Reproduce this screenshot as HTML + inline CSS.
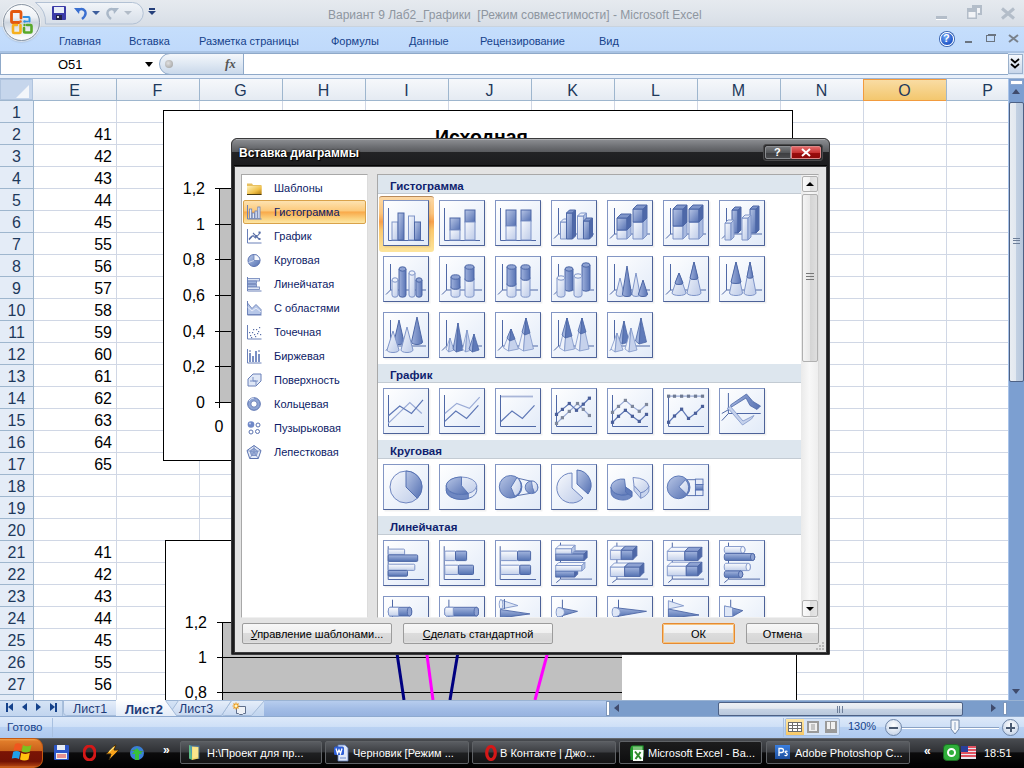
<!DOCTYPE html><html><head><meta charset="utf-8"><style>
*{margin:0;padding:0;box-sizing:border-box}
html,body{width:1024px;height:768px;overflow:hidden;background:#fff;font-family:"Liberation Sans",sans-serif}
.a{position:absolute}
.t{position:absolute;white-space:nowrap;line-height:1}
</style></head><body>
<div class="a" style="left:0;top:0;width:1024px;height:27px;background:linear-gradient(#e6eaef,#dde3ea 60%,#d7dde5)"></div>
<div class="a" style="left:0;top:26px;width:1024px;height:1px;background:#c9d3de"></div>
<svg class="a" style="left:0;top:0" width="150" height="27" viewBox="0 0 150 27"><defs><linearGradient id="qg" x1="0" y1="0" x2="0" y2="1"><stop offset="0" stop-color="#f2f5f9"/><stop offset="1" stop-color="#d6dee8"/></linearGradient></defs><path d="M35.5 2.5H132.5A10.75 10.75 0 0 1 132.5 24H45.5A24.5 24.5 0 0 0 35.5 2.5z" fill="url(#qg)" stroke="#b2c1d4"/></svg>
<svg class="a" style="left:52px;top:6px" width="14" height="14" viewBox="0 0 14 14">
<rect x="0" y="0" width="14" height="14" rx="1" fill="#3b3ba8"/><rect x="2" y="1" width="10" height="6" fill="#e8eef8"/><rect x="4" y="9" width="6" height="5" fill="#20204a"/><rect x="5" y="10" width="2" height="2" fill="#ddd"/></svg>
<svg class="a" style="left:74px;top:6px" width="14" height="14" viewBox="0 0 14 14">
<path d="M3 5 Q8 1 11 5 Q13 9 8 13" fill="none" stroke="#3a6fd0" stroke-width="2.4"/><path d="M0 2 L5 8 L6 2z" fill="#3a6fd0"/></svg>
<div class="a" style="left:92px;top:11px;width:0;height:0;border-left:4px solid transparent;border-right:4px solid transparent;border-top:4px solid #3d5e9c"></div>
<svg class="a" style="left:106px;top:6px" width="13" height="14" viewBox="0 0 13 14">
<path d="M10 5 Q5 1 2 5 Q0 9 5 13" fill="none" stroke="#aab8c8" stroke-width="2.4"/><path d="M13 2 L8 8 L7 2z" fill="#aab8c8"/></svg>
<div class="a" style="left:124px;top:11px;width:0;height:0;border-left:4px solid transparent;border-right:4px solid transparent;border-top:4px solid #b2bcc8"></div>
<div class="a" style="left:149px;top:8px;width:6px;height:2px;background:#243f7a"></div>
<div class="a" style="left:148px;top:11px;width:0;height:0;border-left:4px solid transparent;border-right:4px solid transparent;border-top:4px solid #243f7a"></div>
<div class="t" id="title" style="left:328px;top:9px;font-size:12px;color:#8e96a0">Вариант 9 Лаб2_Графики&nbsp; [Режим совместимости] - Microsoft Excel</div>
<div class="a" style="left:936px;top:16px;width:11px;height:3px;background:#b3bdc9;box-shadow:0 1px 0 #fff"></div>
<svg class="a" style="left:966px;top:4px" width="18" height="16" viewBox="0 0 18 16"><path d="M6 1h10v10h-4v-3h-6z" fill="#b3bdc9"/><rect x="8" y="4" width="6" height="5" fill="#f2f4f7"/><rect x="1" y="4" width="10" height="11" fill="#b3bdc9"/><rect x="2.5" y="8" width="7" height="5.5" fill="#f2f4f7"/></svg>
<svg class="a" style="left:1000px;top:7px" width="16" height="13" viewBox="0 0 16 13"><path d="M2 1.5 L14 11.5 M14 1.5 L2 11.5" stroke="#b3bdc9" stroke-width="3"/></svg>
<div class="a" style="left:0;top:27px;width:1024px;height:26px;background:linear-gradient(#c5defc,#bfd9fb)"></div>
<div class="a" style="left:0;top:51px;width:1024px;height:2px;background:#a9c3e3"></div>
<div class="t" style="left:59px;top:36px;font-size:11px;color:#15428b">Главная</div>
<div class="t" style="left:129px;top:36px;font-size:11px;color:#15428b">Вставка</div>
<div class="t" style="left:199px;top:36px;font-size:11px;color:#15428b">Разметка страницы</div>
<div class="t" style="left:331px;top:36px;font-size:11px;color:#15428b">Формулы</div>
<div class="t" style="left:409px;top:36px;font-size:11px;color:#15428b">Данные</div>
<div class="t" style="left:480px;top:36px;font-size:11px;color:#15428b">Рецензирование</div>
<div class="t" style="left:599px;top:36px;font-size:11px;color:#15428b">Вид</div>
<div class="a" style="left:940px;top:32px;width:14px;height:14px;border-radius:50%;background:radial-gradient(circle at 40% 35%,#6fa4f4,#1f55c7 70%);border:1px solid #fff;box-shadow:0 0 0 1px #3a64b0"></div>
<div class="t" style="left:943px;top:33px;font-size:11px;font-weight:bold;color:#fff">?</div>
<div class="a" style="left:965px;top:41px;width:7px;height:2px;background:#6b7480"></div>
<svg class="a" style="left:986px;top:34px" width="10" height="8" viewBox="0 0 10 8"><rect x="0.5" y="1.5" width="8" height="6" fill="none" stroke="#6b7480"/><rect x="2" y="0" width="8" height="2" fill="#6b7480"/></svg>
<svg class="a" style="left:1008px;top:34px" width="11" height="9" viewBox="0 0 11 9"><path d="M1 1 L10 8 M10 1 L1 8" stroke="#7a828c" stroke-width="2"/></svg>
<div class="a" style="left:3px;top:4px;width:37px;height:37px;border-radius:50%;background:linear-gradient(#fbfcfd,#eef1f5 35%,#cdd5df 50%,#e3e8ee 70%,#ffffff);border:1px solid #8a96a4;box-shadow:0 0 0 1px rgba(255,255,255,.6),0 1px 2px rgba(0,0,0,.25)"></div>
<svg class="a" style="left:0;top:0" width="44" height="44" viewBox="0 0 44 44">
<path d="M19 22.5H13Q11.5 22.5 11.5 21V13Q11.5 11.5 13 11.5H19.5Q21 11.5 21 13V18" fill="none" stroke="#e3580f" stroke-width="2.8" stroke-linecap="round"/>
<path d="M23.5 17H28.5Q29.5 17 29.5 18V21.5" fill="none" stroke="#2f8fe0" stroke-width="2" stroke-linecap="round"/>
<path d="M28 21.5H25" fill="none" stroke="#2f8fe0" stroke-width="1.6" stroke-linecap="round"/>
<path d="M20.5 26V32Q20.5 33 19.5 33H14Q13 33 13 32V26Q13 25 14 25H17" fill="none" stroke="#f6b01e" stroke-width="2.6" stroke-linecap="round"/>
<path d="M27 25H30.5Q31.5 25 31.5 26V31.5Q31.5 32.5 30.5 32.5H25Q24 32.5 24 31.5V28" fill="none" stroke="#58a829" stroke-width="2.6" stroke-linecap="round"/>
<circle cx="20.5" cy="21.5" r="1.3" fill="#ec6a1a"/><circle cx="24.5" cy="21.5" r="1.2" fill="#2f8fe0"/><circle cx="20.5" cy="25" r="1.2" fill="#f6b01e"/><circle cx="24.5" cy="25" r="1.2" fill="#58a829"/>
</svg>
<div class="a" style="left:0;top:53px;width:1024px;height:26px;background:#d8e6f7"></div>
<div class="a" style="left:0;top:53px;width:1008px;height:22px;background:#fff;border-top:1px solid #8fa9c9;border-bottom:1px solid #8fa9c9"></div>
<div class="a" style="left:0;top:53px;width:1px;height:22px;background:#8fa9c9"></div>
<div class="t" style="left:58px;top:58px;font-size:13px;color:#000">O51</div>
<div class="a" style="left:145px;top:62px;width:0;height:0;border-left:4px solid transparent;border-right:4px solid transparent;border-top:5px solid #000"></div>
<div class="a" style="left:159px;top:53px;width:85px;height:22px;border:1px solid #8fa9c9;border-radius:11px 0 0 11px;background:linear-gradient(#f4f7fb,#dfe8f3 50%,#c9d8ea)"></div>
<div class="a" style="left:165px;top:60px;width:8px;height:8px;border-radius:50%;background:radial-gradient(circle at 40% 40%,#e0e0e0,#9a9a9a)"></div>
<div class="t" style="left:225px;top:57px;font-size:13px;font-style:italic;font-weight:bold;font-family:'Liberation Serif',serif;color:#555">fx</div>
<div class="a" style="left:1008px;top:54px;width:15px;height:20px;border:1px solid #9bb1cc;background:linear-gradient(#f5f8fc,#c7d6ea)"></div>
<svg class="a" style="left:1010px;top:58px" width="10" height="11" viewBox="0 0 10 11"><path d="M1 1 L5 4.5 L9 1 M1 6 L5 9.5 L9 6" fill="none" stroke="#000" stroke-width="1.8"/></svg>
<div class="a" style="left:0;top:75px;width:1024px;height:3px;background:#e9f0fa"></div>
<div class="a" style="left:0;top:78px;width:1024px;height:1px;background:#9fb6d4"></div>
<div class="a" style="left:0;top:79px;width:1008px;height:22px;background:linear-gradient(#f6f8fb,#e4eaf2)"></div>
<div class="a" style="left:0;top:100px;width:1008px;height:1px;background:#9eb6ce"></div>
<div class="a" style="left:0;top:79px;width:33px;height:21px;background:#c6d6ec;border:1px solid #b0c4de"></div>
<div class="a" style="left:16px;top:85px;width:0;height:0;border-left:13px solid transparent;border-bottom:13px solid #f3f6fa"></div>
<div class="a" style="left:116px;top:79px;width:1px;height:22px;background:#9eb6ce"></div>
<div class="t" style="left:33px;width:83px;text-align:center;top:83px;font-size:16px;color:#1e395b">E</div>
<div class="a" style="left:199px;top:79px;width:1px;height:22px;background:#9eb6ce"></div>
<div class="t" style="left:116px;width:83px;text-align:center;top:83px;font-size:16px;color:#1e395b">F</div>
<div class="a" style="left:282px;top:79px;width:1px;height:22px;background:#9eb6ce"></div>
<div class="t" style="left:199px;width:83px;text-align:center;top:83px;font-size:16px;color:#1e395b">G</div>
<div class="a" style="left:365px;top:79px;width:1px;height:22px;background:#9eb6ce"></div>
<div class="t" style="left:282px;width:83px;text-align:center;top:83px;font-size:16px;color:#1e395b">H</div>
<div class="a" style="left:448px;top:79px;width:1px;height:22px;background:#9eb6ce"></div>
<div class="t" style="left:365px;width:83px;text-align:center;top:83px;font-size:16px;color:#1e395b">I</div>
<div class="a" style="left:531px;top:79px;width:1px;height:22px;background:#9eb6ce"></div>
<div class="t" style="left:448px;width:83px;text-align:center;top:83px;font-size:16px;color:#1e395b">J</div>
<div class="a" style="left:614px;top:79px;width:1px;height:22px;background:#9eb6ce"></div>
<div class="t" style="left:531px;width:83px;text-align:center;top:83px;font-size:16px;color:#1e395b">K</div>
<div class="a" style="left:697px;top:79px;width:1px;height:22px;background:#9eb6ce"></div>
<div class="t" style="left:614px;width:83px;text-align:center;top:83px;font-size:16px;color:#1e395b">L</div>
<div class="a" style="left:780px;top:79px;width:1px;height:22px;background:#9eb6ce"></div>
<div class="t" style="left:697px;width:83px;text-align:center;top:83px;font-size:16px;color:#1e395b">M</div>
<div class="a" style="left:863px;top:79px;width:1px;height:22px;background:#9eb6ce"></div>
<div class="t" style="left:780px;width:83px;text-align:center;top:83px;font-size:16px;color:#1e395b">N</div>
<div class="a" style="left:863px;top:79px;width:84px;height:22px;background:linear-gradient(#f9dca3,#f3c76e);border:1px solid #f29b3e"></div>
<div class="a" style="left:946px;top:79px;width:1px;height:22px;background:#9eb6ce"></div>
<div class="t" style="left:863px;width:83px;text-align:center;top:83px;font-size:16px;color:#1e395b">O</div>
<div class="a" style="left:1029px;top:79px;width:1px;height:22px;background:#9eb6ce"></div>
<div class="t" style="left:946px;width:83px;text-align:center;top:83px;font-size:16px;color:#1e395b">P</div>
<div class="a" style="left:0;top:101px;width:33px;height:599px;background:#e4ecf7"></div>
<div class="a" style="left:33px;top:101px;width:1px;height:599px;background:#9eb6ce"></div>
<div class="a" style="left:0;top:122px;width:33px;height:1px;background:#9eb6ce"></div>
<div class="a" style="left:34px;top:122px;width:974px;height:1px;background:#d0d7e5"></div>
<div class="a" style="left:0;top:144px;width:33px;height:1px;background:#9eb6ce"></div>
<div class="a" style="left:34px;top:144px;width:974px;height:1px;background:#d0d7e5"></div>
<div class="a" style="left:0;top:166px;width:33px;height:1px;background:#9eb6ce"></div>
<div class="a" style="left:34px;top:166px;width:974px;height:1px;background:#d0d7e5"></div>
<div class="a" style="left:0;top:188px;width:33px;height:1px;background:#9eb6ce"></div>
<div class="a" style="left:34px;top:188px;width:974px;height:1px;background:#d0d7e5"></div>
<div class="a" style="left:0;top:210px;width:33px;height:1px;background:#9eb6ce"></div>
<div class="a" style="left:34px;top:210px;width:974px;height:1px;background:#d0d7e5"></div>
<div class="a" style="left:0;top:232px;width:33px;height:1px;background:#9eb6ce"></div>
<div class="a" style="left:34px;top:232px;width:974px;height:1px;background:#d0d7e5"></div>
<div class="a" style="left:0;top:254px;width:33px;height:1px;background:#9eb6ce"></div>
<div class="a" style="left:34px;top:254px;width:974px;height:1px;background:#d0d7e5"></div>
<div class="a" style="left:0;top:276px;width:33px;height:1px;background:#9eb6ce"></div>
<div class="a" style="left:34px;top:276px;width:974px;height:1px;background:#d0d7e5"></div>
<div class="a" style="left:0;top:298px;width:33px;height:1px;background:#9eb6ce"></div>
<div class="a" style="left:34px;top:298px;width:974px;height:1px;background:#d0d7e5"></div>
<div class="a" style="left:0;top:320px;width:33px;height:1px;background:#9eb6ce"></div>
<div class="a" style="left:34px;top:320px;width:974px;height:1px;background:#d0d7e5"></div>
<div class="a" style="left:0;top:342px;width:33px;height:1px;background:#9eb6ce"></div>
<div class="a" style="left:34px;top:342px;width:974px;height:1px;background:#d0d7e5"></div>
<div class="a" style="left:0;top:364px;width:33px;height:1px;background:#9eb6ce"></div>
<div class="a" style="left:34px;top:364px;width:974px;height:1px;background:#d0d7e5"></div>
<div class="a" style="left:0;top:386px;width:33px;height:1px;background:#9eb6ce"></div>
<div class="a" style="left:34px;top:386px;width:974px;height:1px;background:#d0d7e5"></div>
<div class="a" style="left:0;top:408px;width:33px;height:1px;background:#9eb6ce"></div>
<div class="a" style="left:34px;top:408px;width:974px;height:1px;background:#d0d7e5"></div>
<div class="a" style="left:0;top:430px;width:33px;height:1px;background:#9eb6ce"></div>
<div class="a" style="left:34px;top:430px;width:974px;height:1px;background:#d0d7e5"></div>
<div class="a" style="left:0;top:452px;width:33px;height:1px;background:#9eb6ce"></div>
<div class="a" style="left:34px;top:452px;width:974px;height:1px;background:#d0d7e5"></div>
<div class="a" style="left:0;top:474px;width:33px;height:1px;background:#9eb6ce"></div>
<div class="a" style="left:34px;top:474px;width:974px;height:1px;background:#d0d7e5"></div>
<div class="a" style="left:0;top:496px;width:33px;height:1px;background:#9eb6ce"></div>
<div class="a" style="left:34px;top:496px;width:974px;height:1px;background:#d0d7e5"></div>
<div class="a" style="left:0;top:518px;width:33px;height:1px;background:#9eb6ce"></div>
<div class="a" style="left:34px;top:518px;width:974px;height:1px;background:#d0d7e5"></div>
<div class="a" style="left:0;top:540px;width:33px;height:1px;background:#9eb6ce"></div>
<div class="a" style="left:34px;top:540px;width:974px;height:1px;background:#d0d7e5"></div>
<div class="a" style="left:0;top:562px;width:33px;height:1px;background:#9eb6ce"></div>
<div class="a" style="left:34px;top:562px;width:974px;height:1px;background:#d0d7e5"></div>
<div class="a" style="left:0;top:584px;width:33px;height:1px;background:#9eb6ce"></div>
<div class="a" style="left:34px;top:584px;width:974px;height:1px;background:#d0d7e5"></div>
<div class="a" style="left:0;top:606px;width:33px;height:1px;background:#9eb6ce"></div>
<div class="a" style="left:34px;top:606px;width:974px;height:1px;background:#d0d7e5"></div>
<div class="a" style="left:0;top:628px;width:33px;height:1px;background:#9eb6ce"></div>
<div class="a" style="left:34px;top:628px;width:974px;height:1px;background:#d0d7e5"></div>
<div class="a" style="left:0;top:650px;width:33px;height:1px;background:#9eb6ce"></div>
<div class="a" style="left:34px;top:650px;width:974px;height:1px;background:#d0d7e5"></div>
<div class="a" style="left:0;top:672px;width:33px;height:1px;background:#9eb6ce"></div>
<div class="a" style="left:34px;top:672px;width:974px;height:1px;background:#d0d7e5"></div>
<div class="a" style="left:0;top:694px;width:33px;height:1px;background:#9eb6ce"></div>
<div class="a" style="left:34px;top:694px;width:974px;height:1px;background:#d0d7e5"></div>
<div class="a" style="left:116px;top:101px;width:1px;height:599px;background:#d0d7e5"></div>
<div class="a" style="left:199px;top:101px;width:1px;height:599px;background:#d0d7e5"></div>
<div class="a" style="left:282px;top:101px;width:1px;height:599px;background:#d0d7e5"></div>
<div class="a" style="left:365px;top:101px;width:1px;height:599px;background:#d0d7e5"></div>
<div class="a" style="left:448px;top:101px;width:1px;height:599px;background:#d0d7e5"></div>
<div class="a" style="left:531px;top:101px;width:1px;height:599px;background:#d0d7e5"></div>
<div class="a" style="left:614px;top:101px;width:1px;height:599px;background:#d0d7e5"></div>
<div class="a" style="left:697px;top:101px;width:1px;height:599px;background:#d0d7e5"></div>
<div class="a" style="left:780px;top:101px;width:1px;height:599px;background:#d0d7e5"></div>
<div class="a" style="left:863px;top:101px;width:1px;height:599px;background:#d0d7e5"></div>
<div class="a" style="left:946px;top:101px;width:1px;height:599px;background:#d0d7e5"></div>
<div class="t" style="left:0;width:33px;text-align:center;top:105px;font-size:16px;color:#1e395b">1</div>
<div class="t" style="left:0;width:33px;text-align:center;top:127px;font-size:16px;color:#1e395b">2</div>
<div class="t" style="left:0;width:33px;text-align:center;top:149px;font-size:16px;color:#1e395b">3</div>
<div class="t" style="left:0;width:33px;text-align:center;top:171px;font-size:16px;color:#1e395b">4</div>
<div class="t" style="left:0;width:33px;text-align:center;top:193px;font-size:16px;color:#1e395b">5</div>
<div class="t" style="left:0;width:33px;text-align:center;top:215px;font-size:16px;color:#1e395b">6</div>
<div class="t" style="left:0;width:33px;text-align:center;top:237px;font-size:16px;color:#1e395b">7</div>
<div class="t" style="left:0;width:33px;text-align:center;top:259px;font-size:16px;color:#1e395b">8</div>
<div class="t" style="left:0;width:33px;text-align:center;top:281px;font-size:16px;color:#1e395b">9</div>
<div class="t" style="left:0;width:33px;text-align:center;top:303px;font-size:16px;color:#1e395b">10</div>
<div class="t" style="left:0;width:33px;text-align:center;top:325px;font-size:16px;color:#1e395b">11</div>
<div class="t" style="left:0;width:33px;text-align:center;top:347px;font-size:16px;color:#1e395b">12</div>
<div class="t" style="left:0;width:33px;text-align:center;top:369px;font-size:16px;color:#1e395b">13</div>
<div class="t" style="left:0;width:33px;text-align:center;top:391px;font-size:16px;color:#1e395b">14</div>
<div class="t" style="left:0;width:33px;text-align:center;top:413px;font-size:16px;color:#1e395b">15</div>
<div class="t" style="left:0;width:33px;text-align:center;top:435px;font-size:16px;color:#1e395b">16</div>
<div class="t" style="left:0;width:33px;text-align:center;top:457px;font-size:16px;color:#1e395b">17</div>
<div class="t" style="left:0;width:33px;text-align:center;top:479px;font-size:16px;color:#1e395b">18</div>
<div class="t" style="left:0;width:33px;text-align:center;top:501px;font-size:16px;color:#1e395b">19</div>
<div class="t" style="left:0;width:33px;text-align:center;top:523px;font-size:16px;color:#1e395b">20</div>
<div class="t" style="left:0;width:33px;text-align:center;top:545px;font-size:16px;color:#1e395b">21</div>
<div class="t" style="left:0;width:33px;text-align:center;top:567px;font-size:16px;color:#1e395b">22</div>
<div class="t" style="left:0;width:33px;text-align:center;top:589px;font-size:16px;color:#1e395b">23</div>
<div class="t" style="left:0;width:33px;text-align:center;top:611px;font-size:16px;color:#1e395b">24</div>
<div class="t" style="left:0;width:33px;text-align:center;top:633px;font-size:16px;color:#1e395b">25</div>
<div class="t" style="left:0;width:33px;text-align:center;top:655px;font-size:16px;color:#1e395b">26</div>
<div class="t" style="left:0;width:33px;text-align:center;top:677px;font-size:16px;color:#1e395b">27</div>
<div class="t" style="left:0;width:33px;text-align:center;top:699px;font-size:16px;color:#1e395b">28</div>
<div class="t" style="left:34px;width:78px;text-align:right;top:127px;font-size:16px;color:#000">41</div>
<div class="t" style="left:34px;width:78px;text-align:right;top:149px;font-size:16px;color:#000">42</div>
<div class="t" style="left:34px;width:78px;text-align:right;top:171px;font-size:16px;color:#000">43</div>
<div class="t" style="left:34px;width:78px;text-align:right;top:193px;font-size:16px;color:#000">44</div>
<div class="t" style="left:34px;width:78px;text-align:right;top:215px;font-size:16px;color:#000">45</div>
<div class="t" style="left:34px;width:78px;text-align:right;top:237px;font-size:16px;color:#000">55</div>
<div class="t" style="left:34px;width:78px;text-align:right;top:259px;font-size:16px;color:#000">56</div>
<div class="t" style="left:34px;width:78px;text-align:right;top:281px;font-size:16px;color:#000">57</div>
<div class="t" style="left:34px;width:78px;text-align:right;top:303px;font-size:16px;color:#000">58</div>
<div class="t" style="left:34px;width:78px;text-align:right;top:325px;font-size:16px;color:#000">59</div>
<div class="t" style="left:34px;width:78px;text-align:right;top:347px;font-size:16px;color:#000">60</div>
<div class="t" style="left:34px;width:78px;text-align:right;top:369px;font-size:16px;color:#000">61</div>
<div class="t" style="left:34px;width:78px;text-align:right;top:391px;font-size:16px;color:#000">62</div>
<div class="t" style="left:34px;width:78px;text-align:right;top:413px;font-size:16px;color:#000">63</div>
<div class="t" style="left:34px;width:78px;text-align:right;top:435px;font-size:16px;color:#000">64</div>
<div class="t" style="left:34px;width:78px;text-align:right;top:457px;font-size:16px;color:#000">65</div>
<div class="t" style="left:34px;width:78px;text-align:right;top:545px;font-size:16px;color:#000">41</div>
<div class="t" style="left:34px;width:78px;text-align:right;top:567px;font-size:16px;color:#000">42</div>
<div class="t" style="left:34px;width:78px;text-align:right;top:589px;font-size:16px;color:#000">43</div>
<div class="t" style="left:34px;width:78px;text-align:right;top:611px;font-size:16px;color:#000">44</div>
<div class="t" style="left:34px;width:78px;text-align:right;top:633px;font-size:16px;color:#000">45</div>
<div class="t" style="left:34px;width:78px;text-align:right;top:655px;font-size:16px;color:#000">55</div>
<div class="t" style="left:34px;width:78px;text-align:right;top:677px;font-size:16px;color:#000">56</div>
<div class="a" style="left:163px;top:110px;width:630px;height:351px;background:#fff;border:1px solid #000"></div>
<div class="t" style="left:435px;top:128px;font-size:19.5px;font-weight:bold;color:#000">Исходная</div>
<div class="a" style="left:220px;top:188px;width:300px;height:214px;background:#c0c0c0"></div>
<div class="a" style="left:219px;top:188px;width:1px;height:220px;background:#000"></div>
<div class="a" style="left:215px;top:188px;width:300px;height:1px;background:#000"></div>
<div class="t" style="left:150px;width:55px;text-align:right;top:181.0px;font-size:16px;color:#000">1,2</div>
<div class="a" style="left:215px;top:224px;width:300px;height:1px;background:#000"></div>
<div class="t" style="left:150px;width:55px;text-align:right;top:216.7px;font-size:16px;color:#000">1</div>
<div class="a" style="left:215px;top:259px;width:300px;height:1px;background:#000"></div>
<div class="t" style="left:150px;width:55px;text-align:right;top:252.3px;font-size:16px;color:#000">0,8</div>
<div class="a" style="left:215px;top:295px;width:300px;height:1px;background:#000"></div>
<div class="t" style="left:150px;width:55px;text-align:right;top:288.0px;font-size:16px;color:#000">0,6</div>
<div class="a" style="left:215px;top:331px;width:300px;height:1px;background:#000"></div>
<div class="t" style="left:150px;width:55px;text-align:right;top:323.7px;font-size:16px;color:#000">0,4</div>
<div class="a" style="left:215px;top:366px;width:300px;height:1px;background:#000"></div>
<div class="t" style="left:150px;width:55px;text-align:right;top:359.4px;font-size:16px;color:#000">0,2</div>
<div class="a" style="left:215px;top:402px;width:300px;height:1px;background:#000"></div>
<div class="t" style="left:150px;width:55px;text-align:right;top:395.0px;font-size:16px;color:#000">0</div>
<div class="t" style="left:209px;width:20px;text-align:center;top:419px;font-size:16px;color:#000">0</div>
<div class="a" style="left:165px;top:540px;width:632px;height:200px;background:#fff;border:1px solid #000"></div>
<div class="a" style="left:222px;top:622px;width:400px;height:100px;background:#c0c0c0"></div>
<div class="a" style="left:222px;top:622px;width:1px;height:100px;background:#000"></div>
<div class="a" style="left:217px;top:622px;width:405px;height:1px;background:#000"></div>
<div class="t" style="left:150px;width:57px;text-align:right;top:615px;font-size:16px;color:#000">1,2</div>
<div class="a" style="left:217px;top:657px;width:405px;height:1px;background:#000"></div>
<div class="t" style="left:150px;width:57px;text-align:right;top:650px;font-size:16px;color:#000">1</div>
<div class="a" style="left:217px;top:692px;width:405px;height:1px;background:#000"></div>
<div class="t" style="left:150px;width:57px;text-align:right;top:685px;font-size:16px;color:#000">0,8</div>
<svg class="a" style="left:222px;top:640px" width="400" height="60" viewBox="222 640 400 60">
<path d="M395 640 L404 700" stroke="#000080" stroke-width="3"/>
<path d="M425 640 L433 700" stroke="#ff00ff" stroke-width="3"/>
<path d="M460 640 L450 700" stroke="#000080" stroke-width="3"/>
<path d="M551 640 L535 700" stroke="#ff00ff" stroke-width="3"/>
</svg>
<div class="a" style="left:1008px;top:79px;width:16px;height:621px;background:#7c9fd1;border-left:1px solid #a9c4ea"></div>
<div class="a" style="left:1010px;top:80px;width:13px;height:5px;background:#fff;border:1px solid #8aa6cf"></div>
<div class="a" style="left:1012px;top:89px;width:0;height:0;border-left:4.5px solid transparent;border-right:4.5px solid transparent;border-bottom:5px solid #3f4b6c"></div>
<div class="a" style="left:1009px;top:102px;width:15px;height:280px;border:1px solid #4d6185;border-radius:2px;background:linear-gradient(90deg,#e9edf2,#e2e8f0 45%,#c2d0e2 50%,#b7c7dc)"></div>
<div class="a" style="left:1013px;top:238px;width:7px;height:6px;border-top:1px solid #6d7e98;border-bottom:1px solid #6d7e98"></div>
<div class="a" style="left:1013px;top:240px;width:7px;height:2px;border-top:1px solid #6d7e98"></div>
<div class="a" style="left:1012px;top:689px;width:0;height:0;border-left:4.5px solid transparent;border-right:4.5px solid transparent;border-top:5px solid #3f4b6c"></div>
<div class="a" style="left:0;top:700px;width:1024px;height:17px;background:linear-gradient(#d6e4f6,#c0d4ee)"></div>
<div class="a" style="left:0;top:700px;width:1024px;height:1px;background:#9ab3d3"></div>
<div class="a" style="left:0;top:716px;width:1024px;height:1px;background:#8eaad0"></div>
<div class="a" style="left:6px;top:703px;width:2px;height:9px;background:#15428b"></div>
<div class="a" style="left:8px;top:703px;width:0;height:0;border-top:4.5px solid transparent;border-bottom:4.5px solid transparent;border-right:5px solid #15428b"></div>
<div class="a" style="left:22px;top:703px;width:0;height:0;border-top:4.5px solid transparent;border-bottom:4.5px solid transparent;border-right:5px solid #15428b"></div>
<div class="a" style="left:36px;top:703px;width:0;height:0;border-top:4.5px solid transparent;border-bottom:4.5px solid transparent;border-left:5px solid #15428b"></div>
<div class="a" style="left:50px;top:703px;width:0;height:0;border-top:4.5px solid transparent;border-bottom:4.5px solid transparent;border-left:5px solid #15428b"></div>
<div class="a" style="left:55px;top:703px;width:2px;height:9px;background:#15428b"></div>
<div class="a" style="left:62px;top:701px;width:1px;height:15px;background:#a8bfdc"></div>
<div class="a" style="left:264px;top:701px;width:342px;height:15px;background:linear-gradient(#b7cdee,#a3bde6 50%,#97b3df)"></div>
<svg class="a" style="left:60px;top:700px" width="210" height="17" viewBox="60 700 210 17">
<defs><linearGradient id="tg" x1="0" y1="0" x2="0" y2="1"><stop offset="0" stop-color="#e6eefa"/><stop offset="1" stop-color="#c8d9f1"/></linearGradient>
<linearGradient id="tga" x1="0" y1="0" x2="0" y2="1"><stop offset="0" stop-color="#ffffff"/><stop offset="1" stop-color="#e3ecf8"/></linearGradient></defs>
<path d="M63.5 700.5H116.5V715.5H66.5Q63.5 715.5 63.5 712.5z" fill="url(#tg)" stroke="#a4bbd9"/>
<path d="M231.5 700.5H264.5L251.5 715.5H224.5Q221.5 715.5 223 713z" fill="url(#tg)" stroke="#a4bbd9"/>
<path d="M178.5 700.5H231.5L221.5 715.5H171.5Q168.5 715.5 170 713z" fill="url(#tg)" stroke="#a4bbd9"/>
<path d="M116 700H165.5L176.5 716H116z" fill="url(#tga)"/>
<path d="M165.5 700.5L176.5 715.5" stroke="#a4bbd9"/>
</svg>
<div class="t" style="left:73px;top:703px;font-size:12.5px;color:#1e3b78">Лист1</div>
<div class="t" style="left:125px;top:703px;font-size:13px;font-weight:bold;color:#1e3b78">Лист2</div>
<div class="t" style="left:179px;top:703px;font-size:12.5px;color:#1e3b78">Лист3</div>
<svg class="a" style="left:232px;top:702px" width="16" height="14" viewBox="0 0 16 14"><path d="M4.5 4.5h9v7h-2l-1 1h-3l-1-1h-2z" fill="#eef1f6" stroke="#5f6f8c"/><path d="M4 0.5v7M0.5 4h7M1.5 1.5l5 5M6.5 1.5l-5 5" stroke="#f09a18" stroke-width="1.2"/><circle cx="4" cy="4" r="1.5" fill="#fff6c0"/></svg>
<div class="a" style="left:606px;top:701px;width:4px;height:15px;background:#fff;border:1px solid #7d96ba"></div>
<div class="a" style="left:610px;top:701px;width:414px;height:15px;background:#7b9dcb"></div>
<div class="a" style="left:614px;top:704px;width:0;height:0;border-top:4.5px solid transparent;border-bottom:4.5px solid transparent;border-right:5px solid #3f4b6c"></div>
<div class="a" style="left:718px;top:702px;width:245px;height:14px;border:1px solid #4d6185;border-radius:2px;background:linear-gradient(#eef1f5,#e3e8ef 45%,#c6d3e4 50%,#b9c8dc)"></div>
<div class="a" style="left:837px;top:706px;width:6px;height:7px;border-left:1px solid #6d7e98;border-right:1px solid #6d7e98"></div>
<div class="a" style="left:839px;top:706px;width:2px;height:7px;border-left:1px solid #6d7e98"></div>
<div class="a" style="left:991px;top:704px;width:0;height:0;border-top:4.5px solid transparent;border-bottom:4.5px solid transparent;border-left:5px solid #3f4b6c"></div>
<div class="a" style="left:1003px;top:702px;width:4px;height:13px;background:#fff;border:1px solid #7d96ba"></div>
<div class="a" style="left:0;top:717px;width:1024px;height:21px;background:linear-gradient(#dde9f9,#cfe0f7 45%,#b9d1f2 50%,#aec9ef)"></div>
<div class="t" style="left:7px;top:722px;font-size:11.5px;color:#15428b">Готово</div>
<div class="a" style="left:52px;top:718px;width:1px;height:19px;background:#a8c0e0"></div>
<div class="a" style="left:783px;top:718px;width:1px;height:19px;background:#a8c0e0"></div>
<div class="a" style="left:785px;top:718px;width:55px;height:18px;border:1px solid #a7bfdf;border-radius:2px;background:#d5e3f6"></div>
<div class="a" style="left:786px;top:719px;width:18px;height:16px;background:linear-gradient(#fde7a7,#f8c866)"></div>
<svg class="a" style="left:787px;top:721px" width="16" height="12" viewBox="0 0 16 12"><rect x="1.5" y="1.5" width="13" height="9" fill="#fff" stroke="#6b6b6b"/><path d="M1.5 4.5h13M1.5 7.5h13M5.5 1.5v9M10.5 1.5v9" stroke="#6b6b6b"/></svg>
<svg class="a" style="left:806px;top:720px" width="14" height="14" viewBox="0 0 14 14"><rect x="1" y="1" width="12" height="12" fill="#9a9a9a"/><rect x="3" y="3" width="8" height="8" fill="#f0f0f0"/><path d="M5 5h4M5 7h4M5 9h4" stroke="#999"/></svg>
<svg class="a" style="left:824px;top:720px" width="14" height="14" viewBox="0 0 14 14"><rect x="1" y="1" width="12" height="12" fill="#9a9a9a"/><rect x="3" y="2" width="3" height="7" fill="#f0f0f0"/><rect x="7" y="2" width="4" height="7" fill="#f0f0f0"/></svg>
<div class="t" style="left:848px;top:721px;font-size:11px;color:#15428b">130%</div>
<div class="a" style="left:901px;top:727px;width:98px;height:1px;background:#8aa2c4;box-shadow:0 1px 0 #fff"></div>
<div class="a" style="left:885px;top:719px;width:17px;height:17px;border-radius:50%;border:1px solid #6f86a8;background:radial-gradient(circle at 50% 35%,#fff,#cfdbec 70%,#b6c7df)"></div>
<div class="a" style="left:889px;top:727px;width:9px;height:2px;background:#4a5a72"></div>
<div class="a" style="left:1002px;top:719px;width:17px;height:17px;border-radius:50%;border:1px solid #6f86a8;background:radial-gradient(circle at 50% 35%,#fff,#cfdbec 70%,#b6c7df)"></div>
<div class="a" style="left:1006px;top:727px;width:9px;height:2px;background:#4a5a72"></div>
<div class="a" style="left:1010px;top:723px;width:2px;height:9px;background:#4a5a72"></div>
<svg class="a" style="left:950px;top:719px" width="10" height="16" viewBox="0 0 10 16"><path d="M1 1h8v9l-4 5l-4-5z" fill="#f4f7fb" stroke="#6f86a8"/><path d="M5 3v8" stroke="#8aa2c4"/></svg>
<div class="a" style="left:0;top:738px;width:1024px;height:30px;background:linear-gradient(#4a4d52,#303236 45%,#0b0b0c 50%,#000 100%)"></div>
<div class="a" style="left:0;top:738px;width:1024px;height:1px;background:#65686d"></div>
<div class="a" style="left:0;top:738px;width:43px;height:30px;border-radius:0 9px 9px 0;border:1px solid #c75a12;border-left:none;background:linear-gradient(#f0a04c,#e07c2a 8%,#c9621a 42%,#7a1405 45%,#731204 80%,#a63a0e 95%,#d0682a)"></div>
<svg class="a" style="left:10px;top:742px" width="23" height="22" viewBox="0 0 23 22">
<path d="M5 2Q8 0.5 12 2.5L10.5 9Q7 7 3.5 8.5z" fill="#f0561e"/><path d="M13 3Q17 5.5 21.5 3L20 9.5Q16 11.5 11.5 9.5z" fill="#7cc11e"/>
<path d="M3.2 9.8Q7 8 10.3 10.3L9 17Q5.5 15 1.8 16.6z" fill="#1fa0ea"/><path d="M11.3 10.7Q15.5 13 19.8 10.8L18.5 17.5Q14.5 19.5 10 17.5z" fill="#ffc20e"/></svg>
<svg class="a" style="left:54px;top:745px" width="15" height="15" viewBox="0 0 15 15"><rect x="0" y="0" width="15" height="15" rx="1" fill="#2c56c8"/><rect x="3" y="0" width="8" height="5" fill="#e6ecf6"/><rect x="2" y="8" width="11" height="6" fill="#f0f0f0"/><path d="M3 10h9M3 12h9" stroke="#d33"/></svg>
<svg class="a" style="left:83px;top:745px" width="13" height="16" viewBox="0 0 13 16"><ellipse cx="6.5" cy="8" rx="5.5" ry="7" fill="none" stroke="#d41818" stroke-width="3"/></svg>
<svg class="a" style="left:104px;top:744px" width="17" height="17" viewBox="0 0 17 17"><path d="M11 1L2 10H7L5 16L15 6H10L12 1z" fill="#f7a21b" stroke="#3a2a10" stroke-width="1"/><path d="M10 3L5 8" stroke="#ffe27a" stroke-width="1.2"/></svg>
<svg class="a" style="left:129px;top:745px" width="16" height="16" viewBox="0 0 16 16"><circle cx="8" cy="8" r="7" fill="#3a7fd6"/><path d="M2 6 Q6 3 9 6 Q12 9 14 6" fill="#4aa03a"/><path d="M8 3 L13 9 L10 9 L10 15 L6 15 L6 9 L3 9z" fill="#37c23a"/></svg>
<div class="t" style="left:163px;top:744px;font-size:12px;font-weight:bold;color:#fff">»</div>
<div class="a" style="left:180px;top:741px;width:142px;height:23px;border:1px solid #5f6266;border-radius:2px;background:linear-gradient(#5a5d62,#3c3e42 48%,#1f2022 52%,#141415)"></div>
<div class="t" style="left:207px;top:748px;font-size:11px;color:#fff">H:\Проект для пр...</div>
<div class="a" style="left:325px;top:741px;width:144px;height:23px;border:1px solid #5f6266;border-radius:2px;background:linear-gradient(#5a5d62,#3c3e42 48%,#1f2022 52%,#141415)"></div>
<div class="t" style="left:353px;top:748px;font-size:11px;color:#fff">Черновик [Режим ...</div>
<div class="a" style="left:472px;top:741px;width:144px;height:23px;border:1px solid #5f6266;border-radius:2px;background:linear-gradient(#5a5d62,#3c3e42 48%,#1f2022 52%,#141415)"></div>
<div class="t" style="left:500px;top:748px;font-size:11px;color:#fff">В Контакте | Джо...</div>
<div class="a" style="left:619px;top:741px;width:143px;height:23px;border:1px solid #5f6266;border-radius:2px;background:linear-gradient(#1c1c1d,#0d0d0e)"></div>
<div class="t" style="left:648px;top:748px;font-size:11px;color:#fff">Microsoft Excel - Ва...</div>
<div class="a" style="left:766px;top:741px;width:144px;height:23px;border:1px solid #5f6266;border-radius:2px;background:linear-gradient(#5a5d62,#3c3e42 48%,#1f2022 52%,#141415)"></div>
<div class="t" style="left:795px;top:748px;font-size:11px;color:#fff">Adobe Photoshop C...</div>
<svg class="a" style="left:188px;top:744px" width="13" height="17" viewBox="0 0 13 17"><path d="M1 1L4 2V16L1 14.5z" fill="#5fbf8a"/><path d="M2 1.5H11.5V15H4z" fill="#4a86c8" opacity=".6"/><path d="M4 2.5L10.5 3V14.5L4 16z" fill="#f6d867"/><path d="M4.5 3L10 3.5V13L4.5 14.5z" fill="#fbe58d"/></svg>
<svg class="a" style="left:333px;top:744px" width="17" height="18" viewBox="0 0 17 18"><path d="M5 1H12L15 4V17H5z" fill="#dfe8f8" stroke="#5a78b8" stroke-width=".8"/><path d="M7 14H13" stroke="#6d8ccc"/><rect x="1" y="2.5" width="10" height="8.5" rx="1.5" fill="#2f5fd6"/><path d="M3 4.5L4.5 9.5L6 6L7.5 9.5L9 4.5" fill="none" stroke="#fff" stroke-width="1.3"/></svg>
<svg class="a" style="left:485px;top:745px" width="12" height="16" viewBox="0 0 12 16"><ellipse cx="6" cy="8" rx="4.3" ry="6.5" fill="none" stroke="#d41818" stroke-width="3.2"/></svg>
<svg class="a" style="left:628px;top:745px" width="18" height="17" viewBox="0 0 18 17"><path d="M5 1H15V11H3V4Q3 1 5 1z" fill="#7cc47a" stroke="#1f9a2a" stroke-width="1.2"/><path d="M2.5 4Q3 2 5 2V15H2.5z" fill="#1f9a2a"/><path d="M5 5H15.5L15 16H5z" fill="#fafffa"/><path d="M7 6.5L13 14M12.5 7L7.5 14" stroke="#2f8a2a" stroke-width="2"/></svg>
<svg class="a" style="left:775px;top:745px" width="16" height="15" viewBox="0 0 16 15"><defs><linearGradient id="psg" x1="0" y1="0" x2="0" y2="1"><stop offset="0" stop-color="#3a7fe0"/><stop offset="1" stop-color="#1d4f9e"/></linearGradient></defs><rect width="15" height="14" fill="url(#psg)"/><path d="M4 11V3.5H6.5Q8.5 3.5 8.5 5.5Q8.5 7.5 6.5 7.5H4" fill="none" stroke="#fff" stroke-width="1.3"/><path d="M12.5 6.5Q11.5 5.8 10.5 6.2Q9.6 6.8 10.5 7.6L11.8 8.4Q12.8 9.3 11.6 10.4Q10.5 11 9.5 10.3" fill="none" stroke="#fff" stroke-width="1.2"/></svg>
<div class="t" style="left:924px;top:745px;font-size:12px;font-weight:bold;color:#fff">«</div>
<div class="a" style="left:943px;top:744px;width:17px;height:17px;border-radius:4px;background:#2fae3a;border:1px solid #1a6d22"></div><div class="a" style="left:947px;top:748px;width:9px;height:9px;border-radius:50%;border:2px solid #fff;background:#2fae3a"></div>
<svg class="a" style="left:961px;top:746px" width="15" height="13" viewBox="0 0 15 13"><rect width="15" height="13" fill="#e8e8f0"/><path d="M0 1h15M0 4h15M0 7h15M0 10h15" stroke="#d23" stroke-width="1.5"/><rect width="7" height="6" fill="#2a3f9a"/></svg>
<div class="t" style="left:984px;top:748px;font-size:11px;color:#fff">18:51</div>
<svg width="0" height="0" style="position:absolute"><defs>
<linearGradient id="gD" x1="0" y1="0" x2="1" y2="1"><stop offset="0" stop-color="#b8c6e6"/><stop offset="1" stop-color="#5470b2"/></linearGradient>
<linearGradient id="gDh" x1="0" y1="0" x2="1" y2="0"><stop offset="0" stop-color="#9fb1dc"/><stop offset="1" stop-color="#5873b4"/></linearGradient>
<linearGradient id="gL" x1="0" y1="0" x2="1" y2="1"><stop offset="0" stop-color="#f7f9fd"/><stop offset="1" stop-color="#bccae8"/></linearGradient>
<linearGradient id="gBg" x1="0" y1="0" x2="1" y2="1"><stop offset="0" stop-color="#ffffff"/><stop offset="1" stop-color="#e1eaf8"/></linearGradient>
<linearGradient id="gLv" x1="0" y1="0" x2="0" y2="1"><stop offset="0" stop-color="#fbfcfe"/><stop offset="1" stop-color="#c3d0ea"/></linearGradient>
<linearGradient id="gDv" x1="0" y1="0" x2="0" y2="1"><stop offset="0" stop-color="#a3b5de"/><stop offset="1" stop-color="#5472b2"/></linearGradient>
<linearGradient id="gT" x1="0" y1="0" x2="0" y2="1"><stop offset="0" stop-color="#8fa3d0"/><stop offset="1" stop-color="#6f88c2"/></linearGradient>
</defs></svg>
<div class="a" style="left:231px;top:138px;width:599px;height:517px;background:#1b1b1c;border-radius:6px 6px 1px 1px;border:1px solid #3a3a3c"></div>
<div class="a" style="left:232px;top:139px;width:597px;height:14px;border-radius:5px 5px 0 0;background:linear-gradient(#8e9094,#6a6c70 60%,#555659)"></div>
<div class="a" style="left:232px;top:152px;width:597px;height:14px;background:linear-gradient(#232325,#1c1c1e)"></div>
<div class="a" style="left:234px;top:166px;width:593px;height:487px;background:#3b3b3d"></div>
<div class="a" style="left:236px;top:139px;width:589px;height:1px;background:#a9abae"></div>
<div class="a" style="left:234px;top:165px;width:593px;height:1px;background:#050505"></div>
<div class="a" style="left:235px;top:167px;width:591px;height:485px;background:#e3e3e3"></div>
<div class="t" style="left:239px;top:147px;font-size:12px;font-weight:bold;color:#fff;text-shadow:0 0 2px #000,1px 1px 1px #000">Вставка диаграммы</div>
<div class="a" style="left:763px;top:144px;width:60px;height:17px;border-radius:3px;background:#2a2a2c;border:1px solid #4a4a4c"></div>
<div class="a" style="left:765px;top:146px;width:26px;height:13px;border-radius:2px 0 0 2px;background:linear-gradient(#77797c,#55575a 50%,#3c3d40 52%,#4a4b4e);border:1px solid #8a8c90"></div>
<div class="t" style="left:774px;top:147px;font-size:11px;font-weight:bold;color:#fff">?</div>
<div class="a" style="left:791px;top:146px;width:30px;height:13px;border-radius:0 2px 2px 0;background:linear-gradient(#e26868,#c83434 50%,#9a0c0c 52%,#8e0a0a);border:1px solid #d88"></div>
<svg class="a" style="left:801px;top:148px" width="10" height="9" viewBox="0 0 10 9"><path d="M1 1 L9 8 M9 1 L1 8" stroke="#fff" stroke-width="2"/></svg>
<div class="a" style="left:241px;top:174px;width:127px;height:444px;background:#fff;border:1px solid #a8a8a8;border-right-color:#dcdcdc;border-bottom-color:#f0f0f0"></div>
<div class="a" style="left:243px;top:200px;width:123px;height:24px;border-radius:2px;border:1px solid #d9a24a;background:linear-gradient(#fde2b1,#fcc97a 45%,#f9a94a 50%,#fbd27f 80%,#fde6a5)"></div>
<div class="t" style="left:274px;top:183px;font-size:11px;color:#0c1a66">Шаблоны</div>
<div class="t" style="left:274px;top:207px;font-size:11px;color:#0c1a66">Гистограмма</div>
<div class="t" style="left:274px;top:231px;font-size:11px;color:#0c1a66">График</div>
<div class="t" style="left:274px;top:255px;font-size:11px;color:#0c1a66">Круговая</div>
<div class="t" style="left:274px;top:279px;font-size:11px;color:#0c1a66">Линейчатая</div>
<div class="t" style="left:274px;top:303px;font-size:11px;color:#0c1a66">С областями</div>
<div class="t" style="left:274px;top:327px;font-size:11px;color:#0c1a66">Точечная</div>
<div class="t" style="left:274px;top:351px;font-size:11px;color:#0c1a66">Биржевая</div>
<div class="t" style="left:274px;top:375px;font-size:11px;color:#0c1a66">Поверхность</div>
<div class="t" style="left:274px;top:399px;font-size:11px;color:#0c1a66">Кольцевая</div>
<div class="t" style="left:274px;top:423px;font-size:11px;color:#0c1a66">Пузырьковая</div>
<div class="t" style="left:274px;top:447px;font-size:11px;color:#0c1a66">Лепестковая</div>
<svg class="a" style="left:246px;top:180px" width="17" height="16" viewBox="0 0 17 16"><defs><linearGradient id="fg" x1="0" y1="0" x2="1" y2="1"><stop offset="0" stop-color="#fff3c0"/><stop offset=".6" stop-color="#f0c048"/><stop offset="1" stop-color="#b07a10"/></linearGradient></defs><path d="M1 3.5h5l1 1.5h8.5v9.5H1z" fill="#e8c060"/><path d="M1 6h14.5v8.5H1z" fill="url(#fg)"/><path d="M1 14.5h14.5" stroke="#4a3a10"/></svg>
<svg class="a" style="left:246px;top:204px" width="17" height="16" viewBox="0 0 17 16"><path d="M1.5 1v14h14" stroke="#6a80b8" fill="none"/><rect x="3.5" y="5" width="2.2" height="9.5" fill="#dfe7f6" stroke="#6a80b8" stroke-width=".8"/><rect x="6.2" y="9" width="2.2" height="5.5" fill="#dfe7f6" stroke="#6a80b8" stroke-width=".8"/><rect x="9" y="7" width="2.2" height="7.5" fill="#dfe7f6" stroke="#6a80b8" stroke-width=".8"/><rect x="11.8" y="3" width="2.2" height="11.5" fill="#dfe7f6" stroke="#6a80b8" stroke-width=".8"/></svg>
<svg class="a" style="left:246px;top:228px" width="17" height="16" viewBox="0 0 17 16"><path d="M1.5 1v14h14" stroke="#6a80b8" fill="none"/><path d="M3 12l4-4.5 2.5 2.5 5-5.5" stroke="#5a70a8" fill="none" stroke-width="1.1"/><path d="M3 11l3-3M7 5l3 3 3 3" stroke="#5a70a8" fill="none" stroke-width="1.1"/><rect x="9" y="7" width="2" height="2" fill="#5a70a8"/><rect x="12.5" y="3.5" width="2" height="2" fill="#5a70a8"/><rect x="12.5" y="10" width="2" height="2" fill="#5a70a8"/></svg>
<svg class="a" style="left:246px;top:252px" width="17" height="16" viewBox="0 0 17 16"><defs><linearGradient id="pg" x1="0" y1="0" x2="1" y2="1"><stop offset="0" stop-color="#b8c8ea"/><stop offset="1" stop-color="#5572b2"/></linearGradient></defs><circle cx="8" cy="8.5" r="6" fill="url(#pg)" stroke="#5a72b0"/><path d="M8 8.5V2.5A6 6 0 0 1 14 8.5z" fill="#f6f8fd" stroke="#6a80b8" stroke-width=".8"/><path d="M2.5 10.5L8 8.5" stroke="#e8eef9" stroke-width=".8"/></svg>
<svg class="a" style="left:246px;top:276px" width="17" height="16" viewBox="0 0 17 16"><path d="M1.5 1v14h14" stroke="#6a80b8" fill="none"/><rect x="1.5" y="2.5" width="12" height="2.5" fill="#dfe7f6" stroke="#6a80b8" stroke-width=".8"/><rect x="1.5" y="5" width="9" height="2.5" fill="#9fb2db" stroke="#6a80b8" stroke-width=".8"/><rect x="1.5" y="8.5" width="9" height="2.5" fill="#9fb2db" stroke="#6a80b8" stroke-width=".8"/><rect x="1.5" y="11" width="12" height="2.5" fill="#dfe7f6" stroke="#6a80b8" stroke-width=".8"/></svg>
<svg class="a" style="left:246px;top:300px" width="17" height="16" viewBox="0 0 17 16"><path d="M1.5 1v14h14" stroke="#6a80b8" fill="none"/><path d="M1.5 3L6 8.5L10 4.5L15 9.5V14.5H1.5z" fill="#b7c7e8" stroke="#6a80b8" stroke-width=".9"/><path d="M1.5 7L6 11L10 8L15 12" fill="none" stroke="#eef2fa" stroke-width=".9"/></svg>
<svg class="a" style="left:246px;top:324px" width="17" height="16" viewBox="0 0 17 16"><path d="M1.5 1v14h14" stroke="#6a80b8" fill="none"/><rect x="4" y="11" width="1.2" height="1.2" fill="#5a70a8"/><rect x="6" y="8" width="1.2" height="1.2" fill="#5a70a8"/><rect x="8" y="10" width="1.2" height="1.2" fill="#5a70a8"/><rect x="10" y="5" width="1.2" height="1.2" fill="#5a70a8"/><rect x="12" y="7" width="1.2" height="1.2" fill="#5a70a8"/><rect x="13" y="3" width="1.2" height="1.2" fill="#5a70a8"/><rect x="5" y="13" width="1.2" height="1.2" fill="#5a70a8"/><rect x="9" y="12" width="1.2" height="1.2" fill="#5a70a8"/><rect x="11" y="9" width="1.2" height="1.2" fill="#5a70a8"/><rect x="7" y="5" width="1.2" height="1.2" fill="#5a70a8"/><rect x="14" y="10" width="1.2" height="1.2" fill="#5a70a8"/><rect x="3" y="8" width="1.2" height="1.2" fill="#5a70a8"/></svg>
<svg class="a" style="left:246px;top:348px" width="17" height="16" viewBox="0 0 17 16"><path d="M1.5 1v14h14" stroke="#6a80b8" fill="none"/><path d="M4 5v9M7 8v6M10 3v11M13 6v8" stroke="#7a90c4" stroke-width="2"/><path d="M3 3h2M12 3h2" stroke="#5a70a8"/></svg>
<svg class="a" style="left:246px;top:372px" width="17" height="16" viewBox="0 0 17 16"><path d="M2 7l5-5h8v7l-5 5H2z" fill="#dfe7f6" stroke="#6a80b8"/><path d="M4 9h6v4M7 5v4h5" stroke="#7a90c4" fill="none"/></svg>
<svg class="a" style="left:246px;top:396px" width="17" height="16" viewBox="0 0 17 16"><circle cx="8" cy="8" r="6.3" fill="#8ea4d4" stroke="#5a72b0"/><circle cx="8" cy="8" r="3.2" fill="#fff" stroke="#6a80b8"/><path d="M3 5A6 6 0 0 1 8 2" stroke="#d5def2" fill="none"/></svg>
<svg class="a" style="left:246px;top:420px" width="17" height="16" viewBox="0 0 17 16"><circle cx="5" cy="4.5" r="3.3" fill="#6f88c8"/><circle cx="4" cy="3.5" r="1" fill="#c9d5f0"/><circle cx="12" cy="5" r="2" fill="#fff" stroke="#5a72b0" stroke-width="1"/><circle cx="5" cy="12" r="2" fill="#fff" stroke="#5a72b0" stroke-width="1"/><circle cx="11.5" cy="11.5" r="2" fill="#fff" stroke="#5a72b0" stroke-width="1"/></svg>
<svg class="a" style="left:246px;top:444px" width="17" height="16" viewBox="0 0 17 16"><path d="M8 1.5L15 6.5L12.3 14.5H3.7L1 6.5z" fill="#e6ecf8" stroke="#5a72b0"/><path d="M8 4.5L11.8 7.2L10.4 11.5H5.6L4.2 7.2z" fill="none" stroke="#6a80b8" stroke-width=".8"/><path d="M8 8V1.5M8 8L15 6.5M8 8L12.3 14.5M8 8L3.7 14.5M8 8L1 6.5" stroke="#6a80b8" stroke-width=".7"/><path d="M8 3.5L12 7.5L9.5 12L5 11L3.5 6.5z" fill="#7d94c8" opacity=".7"/></svg>
<div class="a" style="left:377px;top:174px;width:442px;height:444px;background:#fff;border:1px solid #a8a8a8;border-right-color:#dcdcdc;border-bottom-color:#f0f0f0"></div>
<div class="a" style="left:801px;top:175px;width:17px;height:442px;background:linear-gradient(90deg,#eaeaea,#f8f8f8 50%,#eeeeee)"></div>
<div class="a" style="left:802px;top:176px;width:16px;height:16px;border:1px solid #b0b0b0;border-radius:2px;background:linear-gradient(90deg,#fafafa,#f0f0f0 50%,#dcdcdc 51%,#e6e6e6)"></div>
<div class="a" style="left:806px;top:182px;width:0;height:0;border-left:4px solid transparent;border-right:4px solid transparent;border-bottom:4px solid #000"></div>
<div class="a" style="left:802px;top:194px;width:16px;height:168px;border:1px solid #b0b0b0;border-radius:2px;background:linear-gradient(90deg,#f4f4f4,#e8e8e8 50%,#d4d4d4 51%,#dedede)"></div>
<div class="a" style="left:806px;top:273px;width:8px;height:7px;border-top:1px solid #777;border-bottom:1px solid #777"></div><div class="a" style="left:806px;top:276px;width:8px;height:1px;background:#777"></div>
<div class="a" style="left:802px;top:600px;width:16px;height:17px;border:1px solid #b0b0b0;border-radius:2px;background:linear-gradient(90deg,#fafafa,#f0f0f0 50%,#dcdcdc 51%,#e6e6e6)"></div>
<div class="a" style="left:806px;top:607px;width:0;height:0;border-left:4px solid transparent;border-right:4px solid transparent;border-top:4px solid #000"></div>
<div class="a" style="left:378px;top:175px;width:423px;height:442px;overflow:hidden">
<div class="a" style="left:0;top:0px;width:423px;height:19px;background:#dde6ee;border-bottom:1px solid #c3cbd3"></div>
<div class="t" style="left:12px;top:6px;font-size:11.5px;font-weight:bold;color:#0f1f6e">Гистограмма</div>
<div class="a" style="left:1px;top:21px;width:55px;height:56px;border-radius:3px;border-top:1px solid #b88a5a;background:linear-gradient(#fcd9a6,#fbc47c 30%,#f6a04c 45%,#fbc86e 60%,#fde59c)"></div>
<svg class="a" style="left:5px;top:25px" width="48" height="48" viewBox="0 0 48 48"><rect x="1.5" y="1.5" width="46" height="46" fill="#000" opacity=".06"/><rect x="0.5" y="0.5" width="45" height="45" fill="url(#gBg)" stroke="#8396c4"/><path d="M45.5 0.5V45.5H0.5" fill="none" stroke="#4d6298"/><path d="M5.5 8V40.5H41" stroke="#4f68a6" fill="none" stroke-width="1"/><rect x="9" y="22" width="6" height="18" fill="url(#gL)" stroke="#7e94c8" stroke-width="1"/><rect x="15" y="13" width="6" height="27" fill="url(#gD)" stroke="#4d67a6" stroke-width="1"/><rect x="25.5" y="16" width="6" height="24" fill="url(#gL)" stroke="#7e94c8" stroke-width="1"/><rect x="31.5" y="22" width="6" height="18" fill="url(#gD)" stroke="#4d67a6" stroke-width="1"/></svg>
<svg class="a" style="left:61px;top:25px" width="48" height="48" viewBox="0 0 48 48"><rect x="1.5" y="1.5" width="46" height="46" fill="#000" opacity=".06"/><rect x="0.5" y="0.5" width="45" height="45" fill="url(#gBg)" stroke="#8396c4"/><path d="M45.5 0.5V45.5H0.5" fill="none" stroke="#4d6298"/><path d="M5.5 8V40.5H41" stroke="#4f68a6" fill="none" stroke-width="1"/><rect x="11" y="18" width="10" height="12" fill="url(#gD)" stroke="#4d67a6" stroke-width="1"/><rect x="11" y="30" width="10" height="10" fill="url(#gL)" stroke="#7e94c8" stroke-width="1"/><rect x="26" y="10" width="10" height="12" fill="url(#gD)" stroke="#4d67a6" stroke-width="1"/><rect x="26" y="22" width="10" height="18" fill="url(#gL)" stroke="#7e94c8" stroke-width="1"/></svg>
<svg class="a" style="left:117px;top:25px" width="48" height="48" viewBox="0 0 48 48"><rect x="1.5" y="1.5" width="46" height="46" fill="#000" opacity=".06"/><rect x="0.5" y="0.5" width="45" height="45" fill="url(#gBg)" stroke="#8396c4"/><path d="M45.5 0.5V45.5H0.5" fill="none" stroke="#4d6298"/><path d="M5.5 8V40.5H41" stroke="#4f68a6" fill="none" stroke-width="1"/><rect x="11" y="10" width="10" height="16" fill="url(#gD)" stroke="#4d67a6" stroke-width="1"/><rect x="11" y="26" width="10" height="14" fill="url(#gL)" stroke="#7e94c8" stroke-width="1"/><rect x="26" y="10" width="10" height="11" fill="url(#gD)" stroke="#4d67a6" stroke-width="1"/><rect x="26" y="21" width="10" height="19" fill="url(#gL)" stroke="#7e94c8" stroke-width="1"/></svg>
<svg class="a" style="left:173px;top:25px" width="48" height="48" viewBox="0 0 48 48"><rect x="1.5" y="1.5" width="46" height="46" fill="#000" opacity=".06"/><rect x="0.5" y="0.5" width="45" height="45" fill="url(#gBg)" stroke="#8396c4"/><path d="M45.5 0.5V45.5H0.5" fill="none" stroke="#4d6298"/><path d="M7.5 8V34H43M7.5 34L3 38.5" stroke="#4f68a6" fill="none" stroke-width="1"/><path d="M9.5 22h6v17h-6z" fill="url(#gL)" stroke="#7e94c8"/><path d="M9.5 22l3 -3h6l-3 3z" fill="#e8eef9" stroke="#7e94c8"/><path d="M15.5 22l3 -3v17l-3 3z" fill="#a9badf" stroke="#7e94c8"/><path d="M15.5 13h6v26h-6z" fill="url(#gD)" stroke="#4d67a6"/><path d="M15.5 13l3 -3h6l-3 3z" fill="#7f95c9" stroke="#4d67a6"/><path d="M21.5 13l3 -3v26l-3 3z" fill="#4e68a8" stroke="#4d67a6"/><path d="M26.5 16h6v23h-6z" fill="url(#gL)" stroke="#7e94c8"/><path d="M26.5 16l3 -3h6l-3 3z" fill="#e8eef9" stroke="#7e94c8"/><path d="M32.5 16l3 -3v23l-3 3z" fill="#a9badf" stroke="#7e94c8"/><path d="M32.5 21h6v18h-6z" fill="url(#gD)" stroke="#4d67a6"/><path d="M32.5 21l3 -3h6l-3 3z" fill="#7f95c9" stroke="#4d67a6"/><path d="M38.5 21l3 -3v18l-3 3z" fill="#4e68a8" stroke="#4d67a6"/></svg>
<svg class="a" style="left:229px;top:25px" width="48" height="48" viewBox="0 0 48 48"><rect x="1.5" y="1.5" width="46" height="46" fill="#000" opacity=".06"/><rect x="0.5" y="0.5" width="45" height="45" fill="url(#gBg)" stroke="#8396c4"/><path d="M45.5 0.5V45.5H0.5" fill="none" stroke="#4d6298"/><path d="M7.5 8V34H43M7.5 34L3 38.5" stroke="#4f68a6" fill="none" stroke-width="1"/><path d="M10 30h10v9h-10z" fill="url(#gL)" stroke="#7e94c8"/><path d="M10 30l4 -4h10l-4 4z" fill="#e8eef9" stroke="#7e94c8"/><path d="M20 30l4 -4v9l-4 4z" fill="#a9badf" stroke="#7e94c8"/><path d="M10 18h10v12h-10z" fill="url(#gD)" stroke="#4d67a6"/><path d="M10 18l4 -4h10l-4 4z" fill="#7f95c9" stroke="#4d67a6"/><path d="M20 18l4 -4v12l-4 4z" fill="#4e68a8" stroke="#4d67a6"/><path d="M26 22h10v17h-10z" fill="url(#gL)" stroke="#7e94c8"/><path d="M26 22l4 -4h10l-4 4z" fill="#e8eef9" stroke="#7e94c8"/><path d="M36 22l4 -4v17l-4 4z" fill="#a9badf" stroke="#7e94c8"/><path d="M26 9h10v13h-10z" fill="url(#gD)" stroke="#4d67a6"/><path d="M26 9l4 -4h10l-4 4z" fill="#7f95c9" stroke="#4d67a6"/><path d="M36 9l4 -4v13l-4 4z" fill="#4e68a8" stroke="#4d67a6"/></svg>
<svg class="a" style="left:285px;top:25px" width="48" height="48" viewBox="0 0 48 48"><rect x="1.5" y="1.5" width="46" height="46" fill="#000" opacity=".06"/><rect x="0.5" y="0.5" width="45" height="45" fill="url(#gBg)" stroke="#8396c4"/><path d="M45.5 0.5V45.5H0.5" fill="none" stroke="#4d6298"/><path d="M7.5 8V34H43M7.5 34L3 38.5" stroke="#4f68a6" fill="none" stroke-width="1"/><path d="M10 26h10v13h-10z" fill="url(#gL)" stroke="#7e94c8"/><path d="M10 26l4 -4h10l-4 4z" fill="#e8eef9" stroke="#7e94c8"/><path d="M20 26l4 -4v13l-4 4z" fill="#a9badf" stroke="#7e94c8"/><path d="M10 9h10v17h-10z" fill="url(#gD)" stroke="#4d67a6"/><path d="M10 9l4 -4h10l-4 4z" fill="#7f95c9" stroke="#4d67a6"/><path d="M20 9l4 -4v17l-4 4z" fill="#4e68a8" stroke="#4d67a6"/><path d="M26 22h10v17h-10z" fill="url(#gL)" stroke="#7e94c8"/><path d="M26 22l4 -4h10l-4 4z" fill="#e8eef9" stroke="#7e94c8"/><path d="M36 22l4 -4v17l-4 4z" fill="#a9badf" stroke="#7e94c8"/><path d="M26 9h10v13h-10z" fill="url(#gD)" stroke="#4d67a6"/><path d="M26 9l4 -4h10l-4 4z" fill="#7f95c9" stroke="#4d67a6"/><path d="M36 9l4 -4v13l-4 4z" fill="#4e68a8" stroke="#4d67a6"/></svg>
<svg class="a" style="left:341px;top:25px" width="48" height="48" viewBox="0 0 48 48"><rect x="1.5" y="1.5" width="46" height="46" fill="#000" opacity=".06"/><rect x="0.5" y="0.5" width="45" height="45" fill="url(#gBg)" stroke="#8396c4"/><path d="M45.5 0.5V45.5H0.5" fill="none" stroke="#4d6298"/><path d="M7.5 8V34H43M7.5 34L3 38.5" stroke="#4f68a6" fill="none" stroke-width="1"/><path d="M13 10h6v23h-6z" fill="url(#gD)" stroke="#4d67a6"/><path d="M13 10l3 -3h6l-3 3z" fill="#7f95c9" stroke="#4d67a6"/><path d="M19 10l3 -3v23l-3 3z" fill="#4e68a8" stroke="#4d67a6"/><path d="M31 9h6v24h-6z" fill="url(#gD)" stroke="#4d67a6"/><path d="M31 9l3 -3h6l-3 3z" fill="#7f95c9" stroke="#4d67a6"/><path d="M37 9l3 -3v24l-3 3z" fill="#4e68a8" stroke="#4d67a6"/><path d="M6 23h6v17h-6z" fill="url(#gL)" stroke="#7e94c8"/><path d="M6 23l3 -3h6l-3 3z" fill="#e8eef9" stroke="#7e94c8"/><path d="M12 23l3 -3v17l-3 3z" fill="#a9badf" stroke="#7e94c8"/><path d="M23 18h6v22h-6z" fill="url(#gL)" stroke="#7e94c8"/><path d="M23 18l3 -3h6l-3 3z" fill="#e8eef9" stroke="#7e94c8"/><path d="M29 18l3 -3v22l-3 3z" fill="#a9badf" stroke="#7e94c8"/></svg>
<svg class="a" style="left:5px;top:81px" width="48" height="48" viewBox="0 0 48 48"><rect x="1.5" y="1.5" width="46" height="46" fill="#000" opacity=".06"/><rect x="0.5" y="0.5" width="45" height="45" fill="url(#gBg)" stroke="#8396c4"/><path d="M45.5 0.5V45.5H0.5" fill="none" stroke="#4d6298"/><path d="M7.5 8V34H43M7.5 34L3 38.5" stroke="#4f68a6" fill="none" stroke-width="1"/><path d="M9 24v15a3.0 2.2 0 0 0 6 0v-15z" fill="url(#gL)" stroke="#7e94c8"/><ellipse cx="12.0" cy="24" rx="3.0" ry="2.2" fill="#eef2fa" stroke="#7e94c8"/><path d="M16 13v26a3.5 2.2 0 0 0 7 0v-26z" fill="url(#gDh)" stroke="#4d67a6"/><ellipse cx="19.5" cy="13" rx="3.5" ry="2.2" fill="#8ea2d2" stroke="#4d67a6"/><path d="M26 17v22a3.0 2.2 0 0 0 6 0v-22z" fill="url(#gL)" stroke="#7e94c8"/><ellipse cx="29.0" cy="17" rx="3.0" ry="2.2" fill="#eef2fa" stroke="#7e94c8"/><path d="M33 24v15a3.0 2.2 0 0 0 6 0v-15z" fill="url(#gDh)" stroke="#4d67a6"/><ellipse cx="36.0" cy="24" rx="3.0" ry="2.2" fill="#8ea2d2" stroke="#4d67a6"/></svg>
<svg class="a" style="left:61px;top:81px" width="48" height="48" viewBox="0 0 48 48"><rect x="1.5" y="1.5" width="46" height="46" fill="#000" opacity=".06"/><rect x="0.5" y="0.5" width="45" height="45" fill="url(#gBg)" stroke="#8396c4"/><path d="M45.5 0.5V45.5H0.5" fill="none" stroke="#4d6298"/><path d="M7.5 8V34H43M7.5 34L3 38.5" stroke="#4f68a6" fill="none" stroke-width="1"/><path d="M12 31v8a4.5 2.2 0 0 0 9 0v-8z" fill="url(#gL)" stroke="#7e94c8"/><ellipse cx="16.5" cy="31" rx="4.5" ry="2.2" fill="#eef2fa" stroke="#7e94c8"/><path d="M12 21v10a4.5 2.2 0 0 0 9 0v-10z" fill="url(#gDh)" stroke="#4d67a6"/><ellipse cx="16.5" cy="21" rx="4.5" ry="2.2" fill="#8ea2d2" stroke="#4d67a6"/><path d="M26 23v16a4.5 2.2 0 0 0 9 0v-16z" fill="url(#gL)" stroke="#7e94c8"/><ellipse cx="30.5" cy="23" rx="4.5" ry="2.2" fill="#eef2fa" stroke="#7e94c8"/><path d="M26 11v12a4.5 2.2 0 0 0 9 0v-12z" fill="url(#gDh)" stroke="#4d67a6"/><ellipse cx="30.5" cy="11" rx="4.5" ry="2.2" fill="#8ea2d2" stroke="#4d67a6"/></svg>
<svg class="a" style="left:117px;top:81px" width="48" height="48" viewBox="0 0 48 48"><rect x="1.5" y="1.5" width="46" height="46" fill="#000" opacity=".06"/><rect x="0.5" y="0.5" width="45" height="45" fill="url(#gBg)" stroke="#8396c4"/><path d="M45.5 0.5V45.5H0.5" fill="none" stroke="#4d6298"/><path d="M7.5 8V34H43M7.5 34L3 38.5" stroke="#4f68a6" fill="none" stroke-width="1"/><path d="M12 28v11a4.5 2.2 0 0 0 9 0v-11z" fill="url(#gL)" stroke="#7e94c8"/><ellipse cx="16.5" cy="28" rx="4.5" ry="2.2" fill="#eef2fa" stroke="#7e94c8"/><path d="M12 11v17a4.5 2.2 0 0 0 9 0v-17z" fill="url(#gDh)" stroke="#4d67a6"/><ellipse cx="16.5" cy="11" rx="4.5" ry="2.2" fill="#8ea2d2" stroke="#4d67a6"/><path d="M26 22v17a4.5 2.2 0 0 0 9 0v-17z" fill="url(#gL)" stroke="#7e94c8"/><ellipse cx="30.5" cy="22" rx="4.5" ry="2.2" fill="#eef2fa" stroke="#7e94c8"/><path d="M26 11v11a4.5 2.2 0 0 0 9 0v-11z" fill="url(#gDh)" stroke="#4d67a6"/><ellipse cx="30.5" cy="11" rx="4.5" ry="2.2" fill="#8ea2d2" stroke="#4d67a6"/></svg>
<svg class="a" style="left:173px;top:81px" width="48" height="48" viewBox="0 0 48 48"><rect x="1.5" y="1.5" width="46" height="46" fill="#000" opacity=".06"/><rect x="0.5" y="0.5" width="45" height="45" fill="url(#gBg)" stroke="#8396c4"/><path d="M45.5 0.5V45.5H0.5" fill="none" stroke="#4d6298"/><path d="M7.5 8V34H43M7.5 34L3 38.5" stroke="#4f68a6" fill="none" stroke-width="1"/><path d="M14 13v20a4.0 2.2 0 0 0 8 0v-20z" fill="url(#gDh)" stroke="#4d67a6"/><ellipse cx="18.0" cy="13" rx="4.0" ry="2.2" fill="#8ea2d2" stroke="#4d67a6"/><path d="M31 9v24a4.0 2.2 0 0 0 8 0v-24z" fill="url(#gDh)" stroke="#4d67a6"/><ellipse cx="35.0" cy="9" rx="4.0" ry="2.2" fill="#8ea2d2" stroke="#4d67a6"/><path d="M6 22v17a4.0 2.2 0 0 0 8 0v-17z" fill="url(#gL)" stroke="#7e94c8"/><ellipse cx="10.0" cy="22" rx="4.0" ry="2.2" fill="#eef2fa" stroke="#7e94c8"/><path d="M23 20v19a4.0 2.2 0 0 0 8 0v-19z" fill="url(#gL)" stroke="#7e94c8"/><ellipse cx="27.0" cy="20" rx="4.0" ry="2.2" fill="#eef2fa" stroke="#7e94c8"/></svg>
<svg class="a" style="left:229px;top:81px" width="48" height="48" viewBox="0 0 48 48"><rect x="1.5" y="1.5" width="46" height="46" fill="#000" opacity=".06"/><rect x="0.5" y="0.5" width="45" height="45" fill="url(#gBg)" stroke="#8396c4"/><path d="M45.5 0.5V45.5H0.5" fill="none" stroke="#4d6298"/><path d="M7.5 8V34H43M7.5 34L3 38.5" stroke="#4f68a6" fill="none" stroke-width="1"/><path d="M9.0 38L13 22L17.0 38a4.0 2.5 0 0 1 -8 0z" fill="url(#gL)" stroke="#7e94c8"/><path d="M15.5 38L20 10L24.5 38a4.5 2.5 0 0 1 -9 0z" fill="url(#gDh)" stroke="#4d67a6"/><path d="M25.0 38L29 17L33.0 38a4.0 2.5 0 0 1 -8 0z" fill="url(#gL)" stroke="#7e94c8"/><path d="M31.5 38L36 24L40.5 38a4.5 2.5 0 0 1 -9 0z" fill="url(#gDh)" stroke="#4d67a6"/></svg>
<svg class="a" style="left:285px;top:81px" width="48" height="48" viewBox="0 0 48 48"><rect x="1.5" y="1.5" width="46" height="46" fill="#000" opacity=".06"/><rect x="0.5" y="0.5" width="45" height="45" fill="url(#gBg)" stroke="#8396c4"/><path d="M45.5 0.5V45.5H0.5" fill="none" stroke="#4d6298"/><path d="M7.5 8V34H43M7.5 34L3 38.5" stroke="#4f68a6" fill="none" stroke-width="1"/><path d="M9.0 37L16 17L23.0 37a7.0 2.5 0 0 1 -14 0z" fill="url(#gL)" stroke="#7e94c8"/><path d="M12 27L16 17L20 27a4 1.5 0 0 1-8 0z" fill="url(#gDh)" stroke="#4d67a6"/><path d="M24.0 37L31 6L38.0 37a7.0 2.5 0 0 1 -14 0z" fill="url(#gL)" stroke="#7e94c8"/><path d="M27 22L31 6L35 22a4 1.5 0 0 1-8 0z" fill="url(#gDh)" stroke="#4d67a6"/></svg>
<svg class="a" style="left:341px;top:81px" width="48" height="48" viewBox="0 0 48 48"><rect x="1.5" y="1.5" width="46" height="46" fill="#000" opacity=".06"/><rect x="0.5" y="0.5" width="45" height="45" fill="url(#gBg)" stroke="#8396c4"/><path d="M45.5 0.5V45.5H0.5" fill="none" stroke="#4d6298"/><path d="M7.5 8V34H43M7.5 34L3 38.5" stroke="#4f68a6" fill="none" stroke-width="1"/><path d="M10.5 37L17 6L23.5 37a6.5 2.5 0 0 1 -13 0z" fill="url(#gL)" stroke="#7e94c8"/><path d="M12 26L17 6L22 26a5 1.5 0 0 1-10 0z" fill="url(#gDh)" stroke="#4d67a6"/><path d="M25.0 37L31 6L37.0 37a6.0 2.5 0 0 1 -12 0z" fill="url(#gL)" stroke="#7e94c8"/><path d="M28 21L31 6L34 21a3 1.2 0 0 1-6 0z" fill="url(#gDh)" stroke="#4d67a6"/></svg>
<svg class="a" style="left:5px;top:137px" width="48" height="48" viewBox="0 0 48 48"><rect x="1.5" y="1.5" width="46" height="46" fill="#000" opacity=".06"/><rect x="0.5" y="0.5" width="45" height="45" fill="url(#gBg)" stroke="#8396c4"/><path d="M45.5 0.5V45.5H0.5" fill="none" stroke="#4d6298"/><path d="M7.5 8V34H43M7.5 34L3 38.5" stroke="#4f68a6" fill="none" stroke-width="1"/><path d="M11.0 30L16 8L21.0 30a5.0 2.5 0 0 1 -10 0z" fill="url(#gDh)" stroke="#4d67a6"/><path d="M28.5 30L34 5L39.5 30a5.5 2.5 0 0 1 -11 0z" fill="url(#gDh)" stroke="#4d67a6"/><path d="M4.0 38L10 19L16.0 38a6.0 2.5 0 0 1 -12 0z" fill="url(#gL)" stroke="#7e94c8"/><path d="M18.0 38L24 15L30.0 38a6.0 2.5 0 0 1 -12 0z" fill="url(#gL)" stroke="#7e94c8"/></svg>
<svg class="a" style="left:61px;top:137px" width="48" height="48" viewBox="0 0 48 48"><rect x="1.5" y="1.5" width="46" height="46" fill="#000" opacity=".06"/><rect x="0.5" y="0.5" width="45" height="45" fill="url(#gBg)" stroke="#8396c4"/><path d="M45.5 0.5V45.5H0.5" fill="none" stroke="#4d6298"/><path d="M7.5 8V34H43M7.5 34L3 38.5" stroke="#4f68a6" fill="none" stroke-width="1"/><path d="M7.0 37L11 26L9.666666666666666 40z" fill="#eef2fa" stroke="#7e94c8" stroke-width=".8"/><path d="M9.666666666666666 40L11 26L15.0 38z" fill="#c6d2ec" stroke="#7e94c8" stroke-width=".8"/><path d="M14.0 37L19 11L17.333333333333332 40z" fill="#9fb2dc" stroke="#4d67a6" stroke-width=".8"/><path d="M17.333333333333332 40L19 11L24.0 38z" fill="#5f7ab9" stroke="#4d67a6" stroke-width=".8"/><path d="M23.5 37L28 18L26.5 40z" fill="#eef2fa" stroke="#7e94c8" stroke-width=".8"/><path d="M26.5 40L28 18L32.5 38z" fill="#c6d2ec" stroke="#7e94c8" stroke-width=".8"/><path d="M30.0 37L35 22L33.333333333333336 40z" fill="#9fb2dc" stroke="#4d67a6" stroke-width=".8"/><path d="M33.333333333333336 40L35 22L40.0 38z" fill="#5f7ab9" stroke="#4d67a6" stroke-width=".8"/></svg>
<svg class="a" style="left:117px;top:137px" width="48" height="48" viewBox="0 0 48 48"><rect x="1.5" y="1.5" width="46" height="46" fill="#000" opacity=".06"/><rect x="0.5" y="0.5" width="45" height="45" fill="url(#gBg)" stroke="#8396c4"/><path d="M45.5 0.5V45.5H0.5" fill="none" stroke="#4d6298"/><path d="M7.5 8V34H43M7.5 34L3 38.5" stroke="#4f68a6" fill="none" stroke-width="1"/><path d="M8.5 36L16 17L13.5 39z" fill="#eef2fa" stroke="#7e94c8" stroke-width=".8"/><path d="M13.5 39L16 17L23.5 37z" fill="#c6d2ec" stroke="#7e94c8" stroke-width=".8"/><path d="M12.0 26L16 17L14.666666666666666 29z" fill="#9fb2dc" stroke="#4d67a6" stroke-width=".8"/><path d="M14.666666666666666 29L16 17L20.0 27z" fill="#5f7ab9" stroke="#4d67a6" stroke-width=".8"/><path d="M23.5 36L31 6L28.5 39z" fill="#eef2fa" stroke="#7e94c8" stroke-width=".8"/><path d="M28.5 39L31 6L38.5 37z" fill="#c6d2ec" stroke="#7e94c8" stroke-width=".8"/><path d="M27.0 20L31 6L29.666666666666668 23z" fill="#9fb2dc" stroke="#4d67a6" stroke-width=".8"/><path d="M29.666666666666668 23L31 6L35.0 21z" fill="#5f7ab9" stroke="#4d67a6" stroke-width=".8"/></svg>
<svg class="a" style="left:173px;top:137px" width="48" height="48" viewBox="0 0 48 48"><rect x="1.5" y="1.5" width="46" height="46" fill="#000" opacity=".06"/><rect x="0.5" y="0.5" width="45" height="45" fill="url(#gBg)" stroke="#8396c4"/><path d="M45.5 0.5V45.5H0.5" fill="none" stroke="#4d6298"/><path d="M7.5 8V34H43M7.5 34L3 38.5" stroke="#4f68a6" fill="none" stroke-width="1"/><path d="M8.5 36L16 6L13.5 39z" fill="#eef2fa" stroke="#7e94c8" stroke-width=".8"/><path d="M13.5 39L16 6L23.5 37z" fill="#c6d2ec" stroke="#7e94c8" stroke-width=".8"/><path d="M11.0 23L16 6L14.333333333333334 26z" fill="#9fb2dc" stroke="#4d67a6" stroke-width=".8"/><path d="M14.333333333333334 26L16 6L21.0 24z" fill="#5f7ab9" stroke="#4d67a6" stroke-width=".8"/><path d="M24.0 36L31 6L28.666666666666668 39z" fill="#eef2fa" stroke="#7e94c8" stroke-width=".8"/><path d="M28.666666666666668 39L31 6L38.0 37z" fill="#c6d2ec" stroke="#7e94c8" stroke-width=".8"/><path d="M27.0 19L31 6L29.666666666666668 22z" fill="#9fb2dc" stroke="#4d67a6" stroke-width=".8"/><path d="M29.666666666666668 22L31 6L35.0 20z" fill="#5f7ab9" stroke="#4d67a6" stroke-width=".8"/></svg>
<svg class="a" style="left:229px;top:137px" width="48" height="48" viewBox="0 0 48 48"><rect x="1.5" y="1.5" width="46" height="46" fill="#000" opacity=".06"/><rect x="0.5" y="0.5" width="45" height="45" fill="url(#gBg)" stroke="#8396c4"/><path d="M45.5 0.5V45.5H0.5" fill="none" stroke="#4d6298"/><path d="M7.5 8V34H43M7.5 34L3 38.5" stroke="#4f68a6" fill="none" stroke-width="1"/><path d="M12.0 29L17 9L15.333333333333334 32z" fill="#9fb2dc" stroke="#4d67a6" stroke-width=".8"/><path d="M15.333333333333334 32L17 9L22.0 30z" fill="#5f7ab9" stroke="#4d67a6" stroke-width=".8"/><path d="M28.5 29L34 6L32.166666666666664 32z" fill="#9fb2dc" stroke="#4d67a6" stroke-width=".8"/><path d="M32.166666666666664 32L34 6L39.5 30z" fill="#5f7ab9" stroke="#4d67a6" stroke-width=".8"/><path d="M4.0 37L10 21L8.0 40z" fill="#eef2fa" stroke="#7e94c8" stroke-width=".8"/><path d="M8.0 40L10 21L16.0 38z" fill="#c6d2ec" stroke="#7e94c8" stroke-width=".8"/><path d="M18.0 37L24 16L22.0 40z" fill="#eef2fa" stroke="#7e94c8" stroke-width=".8"/><path d="M22.0 40L24 16L30.0 38z" fill="#c6d2ec" stroke="#7e94c8" stroke-width=".8"/></svg>
<div class="a" style="left:0;top:189px;width:423px;height:19px;background:#dde6ee;border-bottom:1px solid #c3cbd3"></div>
<div class="t" style="left:12px;top:195px;font-size:11.5px;font-weight:bold;color:#0f1f6e">График</div>
<svg class="a" style="left:5px;top:213px" width="48" height="48" viewBox="0 0 48 48"><rect x="1.5" y="1.5" width="46" height="46" fill="#000" opacity=".06"/><rect x="0.5" y="0.5" width="45" height="45" fill="url(#gBg)" stroke="#8396c4"/><path d="M45.5 0.5V45.5H0.5" fill="none" stroke="#4d6298"/><path d="M5.5 7V38.5H41" stroke="#4f68a6" fill="none" stroke-width="1"/><polyline points="5.2,35.4 26.8,14.5 38.8,25.5" fill="none" stroke="#9aabd6" stroke-width="1.2"/><polyline points="5.2,28 16.7,18.1 28.5,25.5 40,11.9" fill="none" stroke="#5f78b6" stroke-width="1.2"/></svg>
<svg class="a" style="left:61px;top:213px" width="48" height="48" viewBox="0 0 48 48"><rect x="1.5" y="1.5" width="46" height="46" fill="#000" opacity=".06"/><rect x="0.5" y="0.5" width="45" height="45" fill="url(#gBg)" stroke="#8396c4"/><path d="M45.5 0.5V45.5H0.5" fill="none" stroke="#4d6298"/><path d="M5.5 7V38.5H41" stroke="#4f68a6" fill="none" stroke-width="1"/><polyline points="5.8,25.5 17.8,15.4 30.4,20.3 40.7,9.1" fill="none" stroke="#9aabd6" stroke-width="1.2"/><polyline points="5.8,33.4 16.8,23 27.6,30.4 39.4,17.3" fill="none" stroke="#5f78b6" stroke-width="1.2"/></svg>
<svg class="a" style="left:117px;top:213px" width="48" height="48" viewBox="0 0 48 48"><rect x="1.5" y="1.5" width="46" height="46" fill="#000" opacity=".06"/><rect x="0.5" y="0.5" width="45" height="45" fill="url(#gBg)" stroke="#8396c4"/><path d="M45.5 0.5V45.5H0.5" fill="none" stroke="#4d6298"/><path d="M5.5 7V38.5H41" stroke="#4f68a6" fill="none" stroke-width="1"/><path d="M6 8.5H38" stroke="#a9b6d8" stroke-width="1.8"/><polyline points="5.6,33.7 17,23 27.4,30.4 39.5,17.3" fill="none" stroke="#5f78b6" stroke-width="1.2"/></svg>
<svg class="a" style="left:173px;top:213px" width="48" height="48" viewBox="0 0 48 48"><rect x="1.5" y="1.5" width="46" height="46" fill="#000" opacity=".06"/><rect x="0.5" y="0.5" width="45" height="45" fill="url(#gBg)" stroke="#8396c4"/><path d="M45.5 0.5V45.5H0.5" fill="none" stroke="#4d6298"/><path d="M5.5 7V38.5H41" stroke="#4f68a6" fill="none" stroke-width="1"/><polyline points="5.5,35.4 11.4,29.7 18.3,23.4 26.5,15.5 32.3,21.4 38.4,27.5" fill="none" stroke="#9aabd6" stroke-width="1.2"/><polyline points="5.5,26.4 11.4,21.4 18.3,15.5 25.5,22.3 32.3,16.2 38.4,10.2" fill="none" stroke="#5f78b6" stroke-width="1.2"/><rect x="3.9" y="33.8" width="3.2" height="3.2" fill="#7d879c"/><rect x="9.8" y="28.099999999999998" width="3.2" height="3.2" fill="#7d879c"/><rect x="16.7" y="21.799999999999997" width="3.2" height="3.2" fill="#7d879c"/><rect x="24.9" y="13.9" width="3.2" height="3.2" fill="#7d879c"/><rect x="30.699999999999996" y="19.799999999999997" width="3.2" height="3.2" fill="#7d879c"/><rect x="36.8" y="25.9" width="3.2" height="3.2" fill="#7d879c"/><rect x="3.9" y="24.799999999999997" width="3.2" height="3.2" fill="#4a5f9a"/><rect x="9.8" y="19.799999999999997" width="3.2" height="3.2" fill="#4a5f9a"/><rect x="16.7" y="13.9" width="3.2" height="3.2" fill="#4a5f9a"/><rect x="23.9" y="20.7" width="3.2" height="3.2" fill="#4a5f9a"/><rect x="30.699999999999996" y="14.6" width="3.2" height="3.2" fill="#4a5f9a"/><rect x="36.8" y="8.6" width="3.2" height="3.2" fill="#4a5f9a"/></svg>
<svg class="a" style="left:229px;top:213px" width="48" height="48" viewBox="0 0 48 48"><rect x="1.5" y="1.5" width="46" height="46" fill="#000" opacity=".06"/><rect x="0.5" y="0.5" width="45" height="45" fill="url(#gBg)" stroke="#8396c4"/><path d="M45.5 0.5V45.5H0.5" fill="none" stroke="#4d6298"/><path d="M5.5 7V38.5H41" stroke="#4f68a6" fill="none" stroke-width="1"/><polyline points="5.5,24.4 11.5,18.4 18.4,12.4 25.4,18.4 32.3,23.3 39.5,16.5" fill="none" stroke="#9aabd6" stroke-width="1.2"/><polyline points="5.5,34.3 11.5,28.3 18.4,22.3 25.4,28.3 32.3,33.4 39.5,26.4" fill="none" stroke="#5f78b6" stroke-width="1.2"/><rect x="3.9" y="22.799999999999997" width="3.2" height="3.2" fill="#7d879c"/><rect x="9.9" y="16.799999999999997" width="3.2" height="3.2" fill="#7d879c"/><rect x="16.799999999999997" y="10.8" width="3.2" height="3.2" fill="#7d879c"/><rect x="23.799999999999997" y="16.799999999999997" width="3.2" height="3.2" fill="#7d879c"/><rect x="30.699999999999996" y="21.7" width="3.2" height="3.2" fill="#7d879c"/><rect x="37.9" y="14.9" width="3.2" height="3.2" fill="#7d879c"/><rect x="3.9" y="32.699999999999996" width="3.2" height="3.2" fill="#4a5f9a"/><rect x="9.9" y="26.7" width="3.2" height="3.2" fill="#4a5f9a"/><rect x="16.799999999999997" y="20.7" width="3.2" height="3.2" fill="#4a5f9a"/><rect x="23.799999999999997" y="26.7" width="3.2" height="3.2" fill="#4a5f9a"/><rect x="30.699999999999996" y="31.799999999999997" width="3.2" height="3.2" fill="#4a5f9a"/><rect x="37.9" y="24.799999999999997" width="3.2" height="3.2" fill="#4a5f9a"/></svg>
<svg class="a" style="left:285px;top:213px" width="48" height="48" viewBox="0 0 48 48"><rect x="1.5" y="1.5" width="46" height="46" fill="#000" opacity=".06"/><rect x="0.5" y="0.5" width="45" height="45" fill="url(#gBg)" stroke="#8396c4"/><path d="M45.5 0.5V45.5H0.5" fill="none" stroke="#4d6298"/><path d="M5.5 7V38.5H41" stroke="#4f68a6" fill="none" stroke-width="1"/><polyline points="5.6,8.2 11.5,8.2 18.6,8.2 25.5,8.2 32.5,8.2 39.5,8.2" fill="none" stroke="#9aabd6" stroke-width="1.2"/><polyline points="5.6,34.3 11.5,28 18.6,21.2 25.5,30.4 32.5,25.3 39.5,18.4" fill="none" stroke="#5f78b6" stroke-width="1.2"/><rect x="3.9999999999999996" y="6.6" width="3.2" height="3.2" fill="#6f7b94"/><rect x="9.9" y="6.6" width="3.2" height="3.2" fill="#6f7b94"/><rect x="17.0" y="6.6" width="3.2" height="3.2" fill="#6f7b94"/><rect x="23.9" y="6.6" width="3.2" height="3.2" fill="#6f7b94"/><rect x="30.9" y="6.6" width="3.2" height="3.2" fill="#6f7b94"/><rect x="37.9" y="6.6" width="3.2" height="3.2" fill="#6f7b94"/><rect x="3.9999999999999996" y="32.699999999999996" width="3.2" height="3.2" fill="#4a5f9a"/><rect x="9.9" y="26.4" width="3.2" height="3.2" fill="#4a5f9a"/><rect x="17.0" y="19.599999999999998" width="3.2" height="3.2" fill="#4a5f9a"/><rect x="23.9" y="28.799999999999997" width="3.2" height="3.2" fill="#4a5f9a"/><rect x="30.9" y="23.7" width="3.2" height="3.2" fill="#4a5f9a"/><rect x="37.9" y="16.799999999999997" width="3.2" height="3.2" fill="#4a5f9a"/></svg>
<svg class="a" style="left:341px;top:213px" width="48" height="48" viewBox="0 0 48 48"><rect x="1.5" y="1.5" width="46" height="46" fill="#000" opacity=".06"/><rect x="0.5" y="0.5" width="45" height="45" fill="url(#gBg)" stroke="#8396c4"/><path d="M45.5 0.5V45.5H0.5" fill="none" stroke="#4d6298"/><path d="M9.4 5V25.5H41.7M9.4 25.5L2.8 32.6M2.8 25.5L9.4 21.7" stroke="#4f68a6" fill="none" stroke-width="1"/><path d="M11.5 17L27.5 6L34 13.5L41.5 18L38 21.5L31 17.5L27 10L12.5 19z" fill="url(#gDh)" stroke="#4d67a6" stroke-width=".8"/><path d="M8 20.5L11.5 18.5L24 33L35 27.5L32.5 31L23.5 37L10.5 22z" fill="#c5d1ec" stroke="#7e94c8" stroke-width=".8"/></svg>
<div class="a" style="left:0;top:265px;width:423px;height:19px;background:#dde6ee;border-bottom:1px solid #c3cbd3"></div>
<div class="t" style="left:12px;top:271px;font-size:11.5px;font-weight:bold;color:#0f1f6e">Круговая</div>
<svg class="a" style="left:5px;top:289px" width="48" height="48" viewBox="0 0 48 48"><rect x="1.5" y="1.5" width="46" height="46" fill="#000" opacity=".06"/><rect x="0.5" y="0.5" width="45" height="45" fill="url(#gBg)" stroke="#8396c4"/><path d="M45.5 0.5V45.5H0.5" fill="none" stroke="#4d6298"/><circle cx="23" cy="23" r="16" fill="url(#gL)" stroke="#6f86c0"/><path d="M23 23V7A16 16 0 0 1 34.3 34.3z" fill="url(#gD)" stroke="#5470b2"/></svg>
<svg class="a" style="left:61px;top:289px" width="48" height="48" viewBox="0 0 48 48"><rect x="1.5" y="1.5" width="46" height="46" fill="#000" opacity=".06"/><rect x="0.5" y="0.5" width="45" height="45" fill="url(#gBg)" stroke="#8396c4"/><path d="M45.5 0.5V45.5H0.5" fill="none" stroke="#4d6298"/><path d="M7.3 21.7v5a15.2 8.7 0 0 0 30.4 0v-5" fill="#e3eaf7" stroke="#5470b2" stroke-width=".9"/><path d="M7.3 21.7v5A15.2 8.7 0 0 0 29.3 34.5v-5A15.2 8.7 0 0 1 7.3 21.7z" fill="#6f88c2" stroke="#5470b2" stroke-width=".9"/><ellipse cx="22.5" cy="21.7" rx="15.2" ry="8.7" fill="url(#gL)" stroke="#6f86c0" stroke-width=".9"/><path d="M22.5 13A15.2 8.7 0 1 0 29.3 29.5L22.5 21.7z" fill="url(#gD)" stroke="#5470b2" stroke-width=".9"/></svg>
<svg class="a" style="left:117px;top:289px" width="48" height="48" viewBox="0 0 48 48"><rect x="1.5" y="1.5" width="46" height="46" fill="#000" opacity=".06"/><rect x="0.5" y="0.5" width="45" height="45" fill="url(#gBg)" stroke="#8396c4"/><path d="M45.5 0.5V45.5H0.5" fill="none" stroke="#4d6298"/><path d="M22 14L36.2 17.3M19.8 32L35.1 29.4" stroke="#4d67a6" fill="none" stroke-width=".9"/><circle cx="15.6" cy="22.8" r="11.3" fill="url(#gD)" stroke="#5470b2" stroke-width=".9"/><path d="M16 23.3L22 13.5A11.3 11.3 0 0 1 19.8 32.3z" fill="url(#gL)" stroke="#5470b2" stroke-width=".9"/><circle cx="36.5" cy="23.3" r="6.3" fill="url(#gD)" stroke="#5470b2" stroke-width=".9"/><path d="M36.5 17A6.3 6.3 0 0 1 39.5 28.8L37.5 23.5z" fill="url(#gL)" stroke="#5470b2" stroke-width=".8"/></svg>
<svg class="a" style="left:173px;top:289px" width="48" height="48" viewBox="0 0 48 48"><rect x="1.5" y="1.5" width="46" height="46" fill="#000" opacity=".06"/><rect x="0.5" y="0.5" width="45" height="45" fill="url(#gBg)" stroke="#8396c4"/><path d="M45.5 0.5V45.5H0.5" fill="none" stroke="#4d6298"/><path d="M21 9A15 15 0 1 0 32 34L21 24z" fill="url(#gL)" stroke="#6f86c0"/><path d="M26 6A15 15 0 0 1 37 30L26 20z" fill="url(#gD)" stroke="#5470b2"/></svg>
<svg class="a" style="left:229px;top:289px" width="48" height="48" viewBox="0 0 48 48"><rect x="1.5" y="1.5" width="46" height="46" fill="#000" opacity=".06"/><rect x="0.5" y="0.5" width="45" height="45" fill="url(#gBg)" stroke="#8396c4"/><path d="M45.5 0.5V45.5H0.5" fill="none" stroke="#4d6298"/><path d="M4 23v5A11.5 8 0 0 0 24.9 32.6v-5A11.5 8 0 0 1 4 23z" fill="#6f88c2" stroke="#5470b2" stroke-width=".9"/><path d="M17.5 15.1A11.5 8 0 1 0 24.9 27.6L18.5 23z" fill="url(#gD)" stroke="#5470b2" stroke-width=".9"/><path d="M18.5 23L24.9 27.6V32.6L18.5 28z" fill="#5f7ab9" stroke="#5470b2" stroke-width=".8"/><path d="M27 21.5L33.7 28.8V34.3L27 26.5z" fill="#c9d5ee" stroke="#6f86c0" stroke-width=".8"/><path d="M33.7 28.8Q40 27 41.9 22.2V27Q40 32 33.7 34.3z" fill="#c9d5ee" stroke="#6f86c0" stroke-width=".8"/><path d="M26 13.5L27 21.5L33.7 28.8Q40 27 41.9 22.2Q40 14 26 13.5z" fill="url(#gL)" stroke="#6f86c0" stroke-width=".9"/></svg>
<svg class="a" style="left:285px;top:289px" width="48" height="48" viewBox="0 0 48 48"><rect x="1.5" y="1.5" width="46" height="46" fill="#000" opacity=".06"/><rect x="0.5" y="0.5" width="45" height="45" fill="url(#gBg)" stroke="#8396c4"/><path d="M45.5 0.5V45.5H0.5" fill="none" stroke="#4d6298"/><path d="M22.5 15.7H32.4M23.6 31.6H32.4" stroke="#4d67a6" stroke-width=".9"/><circle cx="15.6" cy="23.3" r="11.4" fill="url(#gD)" stroke="#5470b2" stroke-width=".9"/><path d="M16 22.8L22.5 15.7A11.4 11.4 0 0 1 23.6 30.2z" fill="url(#gL)" stroke="#5470b2" stroke-width=".9"/><rect x="32.4" y="15.1" width="7.6" height="5.5" fill="#e6ecf8" stroke="#5470b2" stroke-width=".9"/><rect x="32.4" y="20.6" width="7.6" height="5.5" fill="url(#gDv)" stroke="#5470b2" stroke-width=".9"/><rect x="32.4" y="26.1" width="7.6" height="5.5" fill="#e6ecf8" stroke="#5470b2" stroke-width=".9"/></svg>
<div class="a" style="left:0;top:341px;width:423px;height:19px;background:#dde6ee;border-bottom:1px solid #c3cbd3"></div>
<div class="t" style="left:12px;top:347px;font-size:11.5px;font-weight:bold;color:#0f1f6e">Линейчатая</div>
<svg class="a" style="left:5px;top:365px" width="48" height="48" viewBox="0 0 48 48"><rect x="1.5" y="1.5" width="46" height="46" fill="#000" opacity=".06"/><rect x="0.5" y="0.5" width="45" height="45" fill="url(#gBg)" stroke="#8396c4"/><path d="M45.5 0.5V45.5H0.5" fill="none" stroke="#4d6298"/><path d="M5.2 6.2V39.5H41" stroke="#4f68a6" fill="none" stroke-width="1"/><rect x="5.2" y="9.1" width="16.4" height="5.8" rx="1" fill="url(#gLv)" stroke="#7e94c8"/><rect x="5.2" y="14.9" width="29.5" height="6.5" rx="1" fill="url(#gDv)" stroke="#4d67a6"/><rect x="5.2" y="24.2" width="26.6" height="6.2" rx="1" fill="url(#gLv)" stroke="#7e94c8"/><rect x="5.2" y="30.4" width="19.3" height="5.8" rx="1" fill="url(#gDv)" stroke="#4d67a6"/></svg>
<svg class="a" style="left:61px;top:365px" width="48" height="48" viewBox="0 0 48 48"><rect x="1.5" y="1.5" width="46" height="46" fill="#000" opacity=".06"/><rect x="0.5" y="0.5" width="45" height="45" fill="url(#gBg)" stroke="#8396c4"/><path d="M45.5 0.5V45.5H0.5" fill="none" stroke="#4d6298"/><path d="M5.2 6.2V39.5H41" stroke="#4f68a6" fill="none" stroke-width="1"/><rect x="5.8" y="11.1" width="10.7" height="9.5" rx="1" fill="url(#gLv)" stroke="#7e94c8"/><rect x="16.5" y="11.1" width="11.1" height="9.5" rx="1" fill="url(#gDv)" stroke="#4d67a6"/><rect x="5.8" y="25.2" width="13.6" height="9.3" rx="1" fill="url(#gLv)" stroke="#7e94c8"/><rect x="19.4" y="25.2" width="15.1" height="9.3" rx="1" fill="url(#gDv)" stroke="#4d67a6"/></svg>
<svg class="a" style="left:117px;top:365px" width="48" height="48" viewBox="0 0 48 48"><rect x="1.5" y="1.5" width="46" height="46" fill="#000" opacity=".06"/><rect x="0.5" y="0.5" width="45" height="45" fill="url(#gBg)" stroke="#8396c4"/><path d="M45.5 0.5V45.5H0.5" fill="none" stroke="#4d6298"/><path d="M5.2 6.2V39.5H41" stroke="#4f68a6" fill="none" stroke-width="1"/><rect x="5.6" y="11.1" width="16.9" height="9.5" rx="1" fill="url(#gLv)" stroke="#7e94c8"/><rect x="22.5" y="11.1" width="13.1" height="9.5" rx="1" fill="url(#gDv)" stroke="#4d67a6"/><rect x="5.6" y="25.2" width="19.2" height="9.3" rx="1" fill="url(#gLv)" stroke="#7e94c8"/><rect x="24.8" y="25.2" width="10.8" height="9.3" rx="1" fill="url(#gDv)" stroke="#4d67a6"/></svg>
<svg class="a" style="left:173px;top:365px" width="48" height="48" viewBox="0 0 48 48"><rect x="1.5" y="1.5" width="46" height="46" fill="#000" opacity=".06"/><rect x="0.5" y="0.5" width="45" height="45" fill="url(#gBg)" stroke="#8396c4"/><path d="M45.5 0.5V45.5H0.5" fill="none" stroke="#4d6298"/><path d="M9.5 2.6V39.1H41M9.5 39.1L5.3 42.6" stroke="#4f68a6" fill="none" stroke-width="1"/><path d="M4.7 13.9h28.4v6.6h-28.4z" fill="url(#gDv)" stroke="#4d67a6" stroke-width=".9"/><path d="M4.7 13.9l3 -3h28.4l-3 3z" fill="#8ea2d2" stroke="#4d67a6" stroke-width=".9"/><path d="M33.1 13.9l3 -3v6.6l-3 3z" fill="#4e68a8" stroke="#4d67a6" stroke-width=".9"/><path d="M4.7 8.7h15.9v5.2h-15.9z" fill="url(#gLv)" stroke="#7e94c8" stroke-width=".9"/><path d="M4.7 8.7l3.5 -3.5h15.9l-3.5 3.5z" fill="#f3f6fc" stroke="#7e94c8" stroke-width=".9"/><path d="M20.6 8.7l3.5 -3.5v5.2l-3.5 3.5z" fill="#b9c8e6" stroke="#7e94c8" stroke-width=".9"/><path d="M4.7 31h19v6.1h-19z" fill="url(#gDv)" stroke="#4d67a6" stroke-width=".9"/><path d="M4.7 31l3 -3h19l-3 3z" fill="#8ea2d2" stroke="#4d67a6" stroke-width=".9"/><path d="M23.7 31l3 -3v6.1l-3 3z" fill="#4e68a8" stroke="#4d67a6" stroke-width=".9"/><path d="M4.7 25.5h26.2v5.5h-26.2z" fill="url(#gLv)" stroke="#7e94c8" stroke-width=".9"/><path d="M4.7 25.5l3 -3h26.2l-3 3z" fill="#f3f6fc" stroke="#7e94c8" stroke-width=".9"/><path d="M30.9 25.5l3 -3v5.5l-3 3z" fill="#b9c8e6" stroke="#7e94c8" stroke-width=".9"/></svg>
<svg class="a" style="left:229px;top:365px" width="48" height="48" viewBox="0 0 48 48"><rect x="1.5" y="1.5" width="46" height="46" fill="#000" opacity=".06"/><rect x="0.5" y="0.5" width="45" height="45" fill="url(#gBg)" stroke="#8396c4"/><path d="M45.5 0.5V45.5H0.5" fill="none" stroke="#4d6298"/><path d="M9.9 2.6V39.1H41M9.9 39.1L5.3 42.6" stroke="#4f68a6" fill="none" stroke-width="1"/><path d="M3.4 10.2h10.9v9.4h-10.9z" fill="url(#gLv)" stroke="#7e94c8" stroke-width=".9"/><path d="M3.4 10.2l4 -4h10.9l-4 4z" fill="#f3f6fc" stroke="#7e94c8" stroke-width=".9"/><path d="M14.3 10.2l4 -4v9.4l-4 4z" fill="#b9c8e6" stroke="#7e94c8" stroke-width=".9"/><path d="M14.3 10.2h11.6v9.4h-11.6z" fill="url(#gDv)" stroke="#4d67a6" stroke-width=".9"/><path d="M14.3 10.2l4 -4h11.6l-4 4z" fill="#8ea2d2" stroke="#4d67a6" stroke-width=".9"/><path d="M25.9 10.2l4 -4v9.4l-4 4z" fill="#4e68a8" stroke="#4d67a6" stroke-width=".9"/><path d="M3.4 27h14.2v9.5h-14.2z" fill="url(#gLv)" stroke="#7e94c8" stroke-width=".9"/><path d="M3.4 27l4 -4h14.2l-4 4z" fill="#f3f6fc" stroke="#7e94c8" stroke-width=".9"/><path d="M17.599999999999998 27l4 -4v9.5l-4 4z" fill="#b9c8e6" stroke="#7e94c8" stroke-width=".9"/><path d="M17.6 27h15.3v9.5h-15.3z" fill="url(#gDv)" stroke="#4d67a6" stroke-width=".9"/><path d="M17.6 27l4 -4h15.3l-4 4z" fill="#8ea2d2" stroke="#4d67a6" stroke-width=".9"/><path d="M32.900000000000006 27l4 -4v9.5l-4 4z" fill="#4e68a8" stroke="#4d67a6" stroke-width=".9"/></svg>
<svg class="a" style="left:285px;top:365px" width="48" height="48" viewBox="0 0 48 48"><rect x="1.5" y="1.5" width="46" height="46" fill="#000" opacity=".06"/><rect x="0.5" y="0.5" width="45" height="45" fill="url(#gBg)" stroke="#8396c4"/><path d="M45.5 0.5V45.5H0.5" fill="none" stroke="#4d6298"/><path d="M9.3 2.6V39.1H41M9.3 39.1L5.3 42.6" stroke="#4f68a6" fill="none" stroke-width="1"/><path d="M4.3 11.3h17.5v9.2h-17.5z" fill="url(#gLv)" stroke="#7e94c8" stroke-width=".9"/><path d="M4.3 11.3l4 -4h17.5l-4 4z" fill="#f3f6fc" stroke="#7e94c8" stroke-width=".9"/><path d="M21.8 11.3l4 -4v9.2l-4 4z" fill="#b9c8e6" stroke="#7e94c8" stroke-width=".9"/><path d="M21.8 11.3h13.1v9.2h-13.1z" fill="url(#gDv)" stroke="#4d67a6" stroke-width=".9"/><path d="M21.8 11.3l4 -4h13.1l-4 4z" fill="#8ea2d2" stroke="#4d67a6" stroke-width=".9"/><path d="M34.9 11.3l4 -4v9.2l-4 4z" fill="#4e68a8" stroke="#4d67a6" stroke-width=".9"/><path d="M4.3 26.2h19v9.6h-19z" fill="url(#gLv)" stroke="#7e94c8" stroke-width=".9"/><path d="M4.3 26.2l4 -4h19l-4 4z" fill="#f3f6fc" stroke="#7e94c8" stroke-width=".9"/><path d="M23.3 26.2l4 -4v9.6l-4 4z" fill="#b9c8e6" stroke="#7e94c8" stroke-width=".9"/><path d="M23.3 26.2h11.6v9.6h-11.6z" fill="url(#gDv)" stroke="#4d67a6" stroke-width=".9"/><path d="M23.3 26.2l4 -4h11.6l-4 4z" fill="#8ea2d2" stroke="#4d67a6" stroke-width=".9"/><path d="M34.9 26.2l4 -4v9.6l-4 4z" fill="#4e68a8" stroke="#4d67a6" stroke-width=".9"/></svg>
<svg class="a" style="left:341px;top:365px" width="48" height="48" viewBox="0 0 48 48"><rect x="1.5" y="1.5" width="46" height="46" fill="#000" opacity=".06"/><rect x="0.5" y="0.5" width="45" height="45" fill="url(#gBg)" stroke="#8396c4"/><path d="M45.5 0.5V45.5H0.5" fill="none" stroke="#4d6298"/><path d="M9.5 2.6V39.1H41M9.5 39.1L5.3 42.6" stroke="#4f68a6" fill="none" stroke-width="1"/><path d="M6.7 6.5h17.1a2.2 3.3 0 0 1 0 6.6h-17.1a1.5 3.3 0 0 1 0 -6.6z" fill="url(#gLv)" stroke="#7e94c8" stroke-width=".9"/><ellipse cx="23.8" cy="9.8" rx="2.2" ry="3.3" fill="#f3f6fc" stroke="#7e94c8" stroke-width=".9"/><path d="M6.7 13.5h26.9a2.2 3.5 0 0 1 0 7h-26.9a1.5 3.5 0 0 1 0 -7z" fill="url(#gDv)" stroke="#4d67a6" stroke-width=".9"/><ellipse cx="33.6" cy="17.0" rx="2.2" ry="3.5" fill="#8ea2d2" stroke="#4d67a6" stroke-width=".9"/><path d="M6.7 23.3h22.5a2.2 3.65 0 0 1 0 7.3h-22.5a1.5 3.65 0 0 1 0 -7.3z" fill="url(#gLv)" stroke="#7e94c8" stroke-width=".9"/><ellipse cx="29.2" cy="26.95" rx="2.2" ry="3.65" fill="#f3f6fc" stroke="#7e94c8" stroke-width=".9"/><path d="M6.7 31h14.899999999999999a2.2 3.3 0 0 1 0 6.6h-14.899999999999999a1.5 3.3 0 0 1 0 -6.6z" fill="url(#gDv)" stroke="#4d67a6" stroke-width=".9"/><ellipse cx="21.599999999999998" cy="34.3" rx="2.2" ry="3.3" fill="#8ea2d2" stroke="#4d67a6" stroke-width=".9"/></svg>
<svg class="a" style="left:5px;top:421px" width="48" height="48" viewBox="0 0 48 48"><rect x="1.5" y="1.5" width="46" height="46" fill="#000" opacity=".06"/><rect x="0.5" y="0.5" width="45" height="45" fill="url(#gBg)" stroke="#8396c4"/><path d="M45.5 0.5V45.5H0.5" fill="none" stroke="#4d6298"/><path d="M9.5 3.7V40" stroke="#4f68a6" fill="none" stroke-width="1"/><path d="M6.8 11.3H26.5a2.2 4.35 0 0 1 0 8.7H6.8a1.5 4.35 0 0 1 0 -8.7z" fill="url(#gDv)" stroke="#4d67a6" stroke-width=".9"/><path d="M6.8 11.3H15.6v8.7H6.8a1.5 4.35 0 0 1 0 -8.7z" fill="url(#gLv)" stroke="#7e94c8" stroke-width=".9"/><ellipse cx="26.5" cy="15.65" rx="2.2" ry="4.35" fill="#8ea2d2" stroke="#4d67a6" stroke-width=".9"/></svg>
<svg class="a" style="left:61px;top:421px" width="48" height="48" viewBox="0 0 48 48"><rect x="1.5" y="1.5" width="46" height="46" fill="#000" opacity=".06"/><rect x="0.5" y="0.5" width="45" height="45" fill="url(#gBg)" stroke="#8396c4"/><path d="M45.5 0.5V45.5H0.5" fill="none" stroke="#4d6298"/><path d="M9.9 3.7V40" stroke="#4f68a6" fill="none" stroke-width="1"/><path d="M7.1 11.3H37.3a2.2 4.35 0 0 1 0 8.7H7.1a1.5 4.35 0 0 1 0 -8.7z" fill="url(#gDv)" stroke="#4d67a6" stroke-width=".9"/><path d="M7.1 11.3H14.3v8.7H7.1a1.5 4.35 0 0 1 0 -8.7z" fill="url(#gLv)" stroke="#7e94c8" stroke-width=".9"/><ellipse cx="37.3" cy="15.65" rx="2.2" ry="4.35" fill="#8ea2d2" stroke="#4d67a6" stroke-width=".9"/></svg>
<svg class="a" style="left:117px;top:421px" width="48" height="48" viewBox="0 0 48 48"><rect x="1.5" y="1.5" width="46" height="46" fill="#000" opacity=".06"/><rect x="0.5" y="0.5" width="45" height="45" fill="url(#gBg)" stroke="#8396c4"/><path d="M45.5 0.5V45.5H0.5" fill="none" stroke="#4d6298"/><path d="M5.4 3.7L22.9 9.6L5.4 13z" fill="#dfe7f6" stroke="#7e94c8" stroke-width=".9"/><ellipse cx="6" cy="8.3" rx="1.8" ry="4.6" fill="#eef2fa" stroke="#7e94c8" stroke-width=".8"/><path d="M5.4 13.5L34.9 17.9L5.4 22z" fill="url(#gDv)" stroke="#4d67a6" stroke-width=".9"/><path d="M9.4 3V13" stroke="#4f68a6" fill="none" stroke-width="1"/></svg>
<svg class="a" style="left:173px;top:421px" width="48" height="48" viewBox="0 0 48 48"><rect x="1.5" y="1.5" width="46" height="46" fill="#000" opacity=".06"/><rect x="0.5" y="0.5" width="45" height="45" fill="url(#gBg)" stroke="#8396c4"/><path d="M45.5 0.5V45.5H0.5" fill="none" stroke="#4d6298"/><path d="M11.4 3.7V40" stroke="#4f68a6" fill="none" stroke-width="1"/><path d="M7 11.5L26.5 15.3L7 21z" fill="url(#gDv)" stroke="#4d67a6" stroke-width=".9"/><path d="M7 11.5Q13.4 12 13.4 16.2Q13.4 20.5 7 21A2.2 4.8 0 0 1 7 11.5z" fill="#dfe7f6" stroke="#7e94c8" stroke-width=".9"/></svg>
<svg class="a" style="left:229px;top:421px" width="48" height="48" viewBox="0 0 48 48"><rect x="1.5" y="1.5" width="46" height="46" fill="#000" opacity=".06"/><rect x="0.5" y="0.5" width="45" height="45" fill="url(#gBg)" stroke="#8396c4"/><path d="M45.5 0.5V45.5H0.5" fill="none" stroke="#4d6298"/><path d="M11.5 3.7V40" stroke="#4f68a6" fill="none" stroke-width="1"/><path d="M7 11.5L39.5 15.3L7 21z" fill="url(#gDv)" stroke="#4d67a6" stroke-width=".9"/><path d="M7 11.5Q13.2 12 13.2 16.2Q13.2 20.5 7 21A2.2 4.8 0 0 1 7 11.5z" fill="#dfe7f6" stroke="#7e94c8" stroke-width=".9"/></svg>
<svg class="a" style="left:285px;top:421px" width="48" height="48" viewBox="0 0 48 48"><rect x="1.5" y="1.5" width="46" height="46" fill="#000" opacity=".06"/><rect x="0.5" y="0.5" width="45" height="45" fill="url(#gBg)" stroke="#8396c4"/><path d="M45.5 0.5V45.5H0.5" fill="none" stroke="#4d6298"/><path d="M9.5 3V12" stroke="#4f68a6" fill="none" stroke-width="1"/><path d="M5.4 4.7L20.7 9.8L5.4 13z" fill="#dfe7f6" stroke="#7e94c8" stroke-width=".9"/><path d="M5.4 13L36 19L5.4 22z" fill="url(#gDv)" stroke="#4d67a6" stroke-width=".9"/></svg>
<svg class="a" style="left:341px;top:421px" width="48" height="48" viewBox="0 0 48 48"><rect x="1.5" y="1.5" width="46" height="46" fill="#000" opacity=".06"/><rect x="0.5" y="0.5" width="45" height="45" fill="url(#gBg)" stroke="#8396c4"/><path d="M45.5 0.5V45.5H0.5" fill="none" stroke="#4d6298"/><path d="M11.7 3.7V40" stroke="#4f68a6" fill="none" stroke-width="1"/><path d="M5.5 10L23.8 14.6L13.5 20.5H5.5z" fill="url(#gDv)" stroke="#4d67a6" stroke-width=".9"/><path d="M5.5 10L13.5 11.5V20.5H5.5z" fill="#dfe7f6" stroke="#7e94c8" stroke-width=".9"/></svg>
</div>
<div class="a" style="left:242px;top:623px;width:150px;height:21px;border:1px solid #9c9c9c;border-radius:2px;background:linear-gradient(#f7f7f7,#f0f0f0 45%,#dcdcdc 50%,#d6d6d6 90%,#e2e2e2)"></div>
<div class="t" style="left:242px;width:150px;text-align:center;top:629px;font-size:11px;color:#000"><u>У</u>правление шаблонами...</div>
<div class="a" style="left:403px;top:623px;width:150px;height:21px;border:1px solid #9c9c9c;border-radius:2px;background:linear-gradient(#f7f7f7,#f0f0f0 45%,#dcdcdc 50%,#d6d6d6 90%,#e2e2e2)"></div>
<div class="t" style="left:403px;width:150px;text-align:center;top:629px;font-size:11px;color:#000"><u>С</u>делать стандартной</div>
<div class="a" style="left:662px;top:623px;width:73px;height:21px;border:1px solid #e58a33;border-radius:2px;background:linear-gradient(#f7f7f7,#f0f0f0 45%,#dcdcdc 50%,#d6d6d6 90%,#e2e2e2)"></div>
<div class="a" style="left:663px;top:624px;width:71px;height:19px;border:1px solid #f7c27a;border-radius:1px"></div>
<div class="t" style="left:662px;width:73px;text-align:center;top:629px;font-size:11px;color:#000">ОК</div>
<div class="a" style="left:746px;top:623px;width:73px;height:21px;border:1px solid #9c9c9c;border-radius:2px;background:linear-gradient(#f7f7f7,#f0f0f0 45%,#dcdcdc 50%,#d6d6d6 90%,#e2e2e2)"></div>
<div class="t" style="left:746px;width:73px;text-align:center;top:629px;font-size:11px;color:#000">Отмена</div>
<svg class="a" style="left:814px;top:640px" width="11" height="11" viewBox="0 0 11 11"><g fill="#b8b8b8"><rect x="8" y="2" width="2" height="2"/><rect x="5" y="5" width="2" height="2"/><rect x="8" y="5" width="2" height="2"/><rect x="2" y="8" width="2" height="2"/><rect x="5" y="8" width="2" height="2"/><rect x="8" y="8" width="2" height="2"/></g></svg>
</body></html>
